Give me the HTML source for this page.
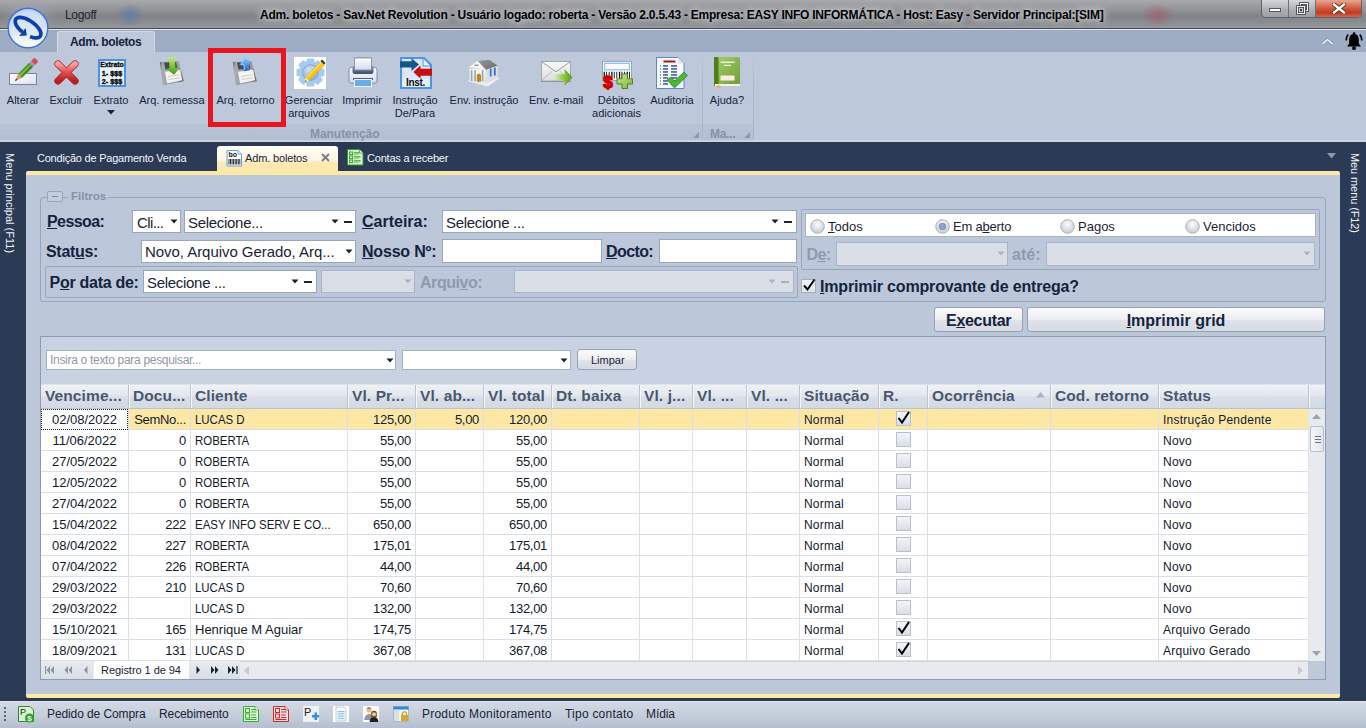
<!DOCTYPE html><html><head><meta charset="utf-8"><style>
*{box-sizing:border-box}
html,body{margin:0;padding:0;width:1366px;height:728px;overflow:hidden;background:#2b3a55;font-family:"Liberation Sans", sans-serif}
#root{position:relative;width:1366px;height:728px;overflow:hidden}
.u{text-decoration:underline}
</style></head><body><div id="root"><div style="position:absolute;left:0px;top:0px;width:1366px;height:29px;background:linear-gradient(180deg,#a8a9ab 0%,#94969a 30%,#818387 55%,#8b8e92 80%,#979a9e 100%);"></div><div style="position:absolute;left:0px;top:0px;width:60px;height:28px;background:radial-gradient(ellipse at center,rgba(170,175,190,0.5),rgba(0,0,0,0) 70%);"></div><div style="position:absolute;left:115px;top:2px;width:30px;height:26px;background:radial-gradient(ellipse at center,rgba(95,120,170,0.75),rgba(95,120,170,0) 65%);"></div><div style="position:absolute;left:1140px;top:2px;width:36px;height:26px;background:radial-gradient(ellipse at center,rgba(170,80,100,0.6),rgba(0,0,0,0) 65%);"></div><div style="position:absolute;left:0px;top:28px;width:1366px;height:1px;background:#4a4d52;"></div><div style="position:absolute;left:0px;top:29px;width:1366px;height:1px;background:#e2e5ea;"></div><div style="position:absolute;left:260px;top:9px;font-size:12px;font-weight:700;color:#000;white-space:nowrap;line-height:1;letter-spacing:-0.23px;text-shadow:0 0 9px rgba(215,218,222,0.9),0 0 9px rgba(215,218,222,0.7),0 0 4px rgba(225,228,232,0.6);">Adm. boletos - Sav.Net Revolution - Usuário logado: roberta - Versão 2.0.5.43 - Empresa: EASY INFO INFORMÁTICA - Host: Easy - Servidor Principal:[SIM]</div><div style="position:absolute;left:65px;top:9px;font-size:12px;font-weight:400;color:#1e2530;white-space:nowrap;line-height:1;letter-spacing:-0.3px;">Logoff</div><div style="position:absolute;left:1261px;top:0px;width:101px;height:18px;border:1px solid #5d6168;border-top:none;border-radius:0 0 5px 5px;background:linear-gradient(180deg,#d5d7da,#a9adb2 60%,#9ca0a6);overflow:hidden;"><div style="position:absolute;left:0px;top:0px;width:27px;height:17px;border-right:1px solid #6d7177;"><div style="position:absolute;left:7px;top:8px;width:12px;height:4px;background:#fff;border:1px solid #555;"></div></div><div style="position:absolute;left:27px;top:0px;width:27px;height:17px;border-right:1px solid #6d7177;"><svg style="position:absolute;left:7px;top:2px" width="13" height="13"><rect x="4.5" y="1.5" width="7" height="7" fill="none" stroke="#3a3d42" stroke-width="2.6"/><rect x="4.5" y="1.5" width="7" height="7" fill="none" stroke="#f4f4f4" stroke-width="1"/><rect x="1.5" y="4.5" width="7" height="7" fill="#c9ccd0" stroke="#3a3d42" stroke-width="2.6"/><rect x="1.5" y="4.5" width="7" height="7" fill="none" stroke="#f4f4f4" stroke-width="1"/><rect x="4" y="7" width="2" height="2" fill="#3a3d42"/></svg></div><div style="position:absolute;left:54px;top:0px;width:46px;height:17px;background:linear-gradient(180deg,#e8a793,#d0573b 50%,#c23a1f 75%,#d46a4c);"><svg style="position:absolute;left:16px;top:3px" width="14" height="11"><path d="M2 1.5 L12 9.5 M12 1.5 L2 9.5" stroke="#5a2a20" stroke-width="4.2" stroke-linecap="square"/><path d="M2 1.5 L12 9.5 M12 1.5 L2 9.5" stroke="#fff" stroke-width="2.4" stroke-linecap="square"/></svg></div></div><div style="position:absolute;left:0px;top:30px;width:1366px;height:22px;background:#9eadc4;"></div><div style="position:absolute;left:57px;top:31px;width:98px;height:22px;background:#bdc9da;border-radius:3px 3px 0 0;border:1px solid #d0d9e6;border-bottom:none;"></div><div style="position:absolute;left:70px;top:36px;font-size:12px;font-weight:700;color:#15243e;white-space:nowrap;line-height:1;letter-spacing:-0.4px;">Adm. boletos</div><svg style="position:absolute;left:1321px;top:37px" width="13" height="8" viewBox="0 0 13 8"><path d="M1.5 7 L6.5 2.5 L11.5 7" fill="none" stroke="#8a93a3" stroke-width="3.2"/><path d="M1.5 7 L6.5 2.5 L11.5 7" fill="none" stroke="#f7f8fa" stroke-width="1.6"/></svg><svg style="position:absolute;left:1344px;top:31px" width="20" height="20" viewBox="0 0 20 20"><path d="M10 3 C6.2 3 5.2 6 5.2 9 L5.2 12.5 L3 15.5 L17 15.5 L14.8 12.5 L14.8 9 C14.8 6 13.8 3 10 3 Z" fill="#000"/><circle cx="10" cy="2.6" r="1.3" fill="#000"/><circle cx="10" cy="17.2" r="1.9" fill="#000"/><path d="M4.2 3.5 Q2 6 2.2 9.5 M15.8 3.5 Q18 6 17.8 9.5" stroke="#000" stroke-width="1.6" fill="none"/></svg><svg style="position:absolute;left:6px;top:6px" width="44" height="44" viewBox="0 0 44 44"><defs><linearGradient id="lg" x1="0" y1="0" x2="0" y2="1"><stop offset="0" stop-color="#b9cdf2"/><stop offset="0.5" stop-color="#d6e2f8"/><stop offset="1" stop-color="#ffffff"/></linearGradient></defs><circle cx="22" cy="22" r="19.8" fill="url(#lg)" stroke="#3f72d6" stroke-width="1.4"/><ellipse cx="22" cy="14" rx="15" ry="9" fill="#ffffff" opacity="0.18"/><path d="M24.06 30.57 L25.16 30.97 L26.23 31.31 L27.28 31.57 L28.28 31.76 L29.23 31.86 L30.13 31.90 L30.97 31.85 L31.74 31.73 L32.44 31.52 L33.05 31.25 L33.59 30.90 L34.03 30.48 L34.39 29.99 L34.65 29.44 L34.81 28.83 L34.88 28.17 L34.85 27.46 L34.72 26.70 L34.50 25.90 L34.18 25.07 L33.77 24.22 L33.27 23.34 L32.68 22.46 L32.02 21.56 L31.27 20.67 L30.46 19.79 L29.59 18.92 L28.65 18.07 L27.67 17.24 L26.64 16.45 L25.58 15.70 L24.49 15.00 L23.38 14.34 L22.27 13.75 L21.15 13.21 L20.04 12.73 L18.94 12.33 L17.87 11.99 L16.82 11.73 L15.82 11.54 L14.87 11.44 L13.97 11.40 L13.13 11.45 L12.36 11.57 L11.66 11.78 L11.05 12.05 L10.51 12.40 L10.07 12.82 L9.71 13.31 L9.45 13.86 L9.29 14.47 L9.22 15.13 L9.25 15.84 L9.38 16.60 L9.60 17.40 L9.92 18.23 L10.33 19.08 L10.83 19.96 L11.42 20.84 L12.08 21.74 L12.83 22.63 L13.64 23.51 L14.51 24.38 L15.45 25.23 L16.43 26.06" fill="none" stroke="#0b3fae" stroke-width="3.7"/><path d="M13.18 30.11 L20.80 29.56 L19.69 22.00 Z" fill="#0b3fae"/></svg><div style="position:absolute;left:0px;top:52px;width:1366px;height:88px;background:#bdc9da;"></div><div style="position:absolute;left:0px;top:124px;width:753px;height:16px;background:linear-gradient(180deg,#b8c4d5,#b4c0d2);"></div><div style="position:absolute;left:0px;top:140px;width:1366px;height:2px;background:#c9d3e1;"></div><svg style="position:absolute;left:7px;top:56px;" width="32" height="32" viewBox="0 0 32 32">
<defs><linearGradient id="pg" x1="0" y1="0" x2="1" y2="0"><stop offset="0" stop-color="#5aa02a"/><stop offset="1" stop-color="#3c7d1c"/></linearGradient>
<linearGradient id="wr" x1="0" y1="0" x2="1" y2="1"><stop offset="0" stop-color="#ffffff"/><stop offset="1" stop-color="#dde1ef"/></linearGradient></defs>
<rect x="2.5" y="17.5" width="27" height="11" fill="url(#wr)" stroke="#7b80a8" stroke-width="1"/>
<path d="M8.00 25.00 L14.93 22.03 L10.97 18.07 Z" fill="#d9a070" /><path d="M8.00 25.00 L10.57 23.89 L9.11 22.43 Z" fill="#2a2a2a" /><path d="M14.93 22.03 L26.18 10.78 L22.22 6.82 L10.97 18.07 Z" fill="url(#pg)" /><path d="M13.15 20.25 L24.39 9.00 L23.50 8.11 L12.26 19.36 Z" fill="#c8ec7a" opacity="0.55"/><path d="M26.18 10.78 L28.30 8.66 L24.34 4.70 L22.22 6.82 Z" fill="#8e9cc4" /><path d="M28.30 8.66 L30.91 6.05 L30.49 4.49 L28.51 2.51 L26.95 2.09 L24.34 4.70 Z" fill="#e0464d" /></svg><svg style="position:absolute;left:52px;top:56px;" width="32" height="32" viewBox="0 0 32 32">
<defs><linearGradient id="xg" x1="0" y1="0" x2="0" y2="1"><stop offset="0" stop-color="#f7a3a3"/><stop offset="0.45" stop-color="#e35050"/><stop offset="1" stop-color="#b91f1f"/></linearGradient></defs>
<path d="M6 8 L23 25 M23 8 L6 25" stroke="#a81c1c" stroke-width="7.2" stroke-linecap="round"/>
<path d="M6 8 L23 25 M23 8 L6 25" stroke="url(#xg)" stroke-width="5.8" stroke-linecap="round"/>
</svg><svg style="position:absolute;left:98px;top:59px;" width="28" height="28" viewBox="0 0 28 28">
<rect x="1" y="1" width="26" height="26" fill="#eaf3fd" stroke="#4a92e6" stroke-width="2"/>
<text x="14" y="8.3" font-family="Liberation Sans" font-weight="700" font-size="6.8" text-anchor="middle" fill="#111" stroke="#111" stroke-width="0.35">Extrato</text>
<text x="14" y="17.3" font-family="Liberation Sans" font-weight="700" font-size="7.2" text-anchor="middle" fill="#111" stroke="#111" stroke-width="0.4">1- $$$</text>
<text x="14" y="24.6" font-family="Liberation Sans" font-weight="700" font-size="7.2" text-anchor="middle" fill="#111" stroke="#111" stroke-width="0.4">2- $$$</text>
</svg><svg style="position:absolute;left:155px;top:56px;" width="32" height="32" viewBox="0 0 32 32">
<defs><linearGradient id="ag155" x1="0" y1="0" x2="0" y2="1"><stop offset="0" stop-color="#c2f070"/><stop offset="1" stop-color="#3e9a16"/></linearGradient>
<linearGradient id="fg155" x1="0" y1="0" x2="1" y2="0.2"><stop offset="0" stop-color="#5e6166"/><stop offset="0.15" stop-color="#a9abae"/><stop offset="0.85" stop-color="#9a9c9f"/><stop offset="1" stop-color="#6b6e72"/></linearGradient></defs>
<path d="M4.8 5.9 L23.6 5.1 L28.8 25.2 L7.9 29.4 Z" fill="url(#fg155)"/>
<path d="M9 6.5 L21 6 L22.5 12.5 L10.5 13.5 Z" fill="#46494e"/>
<path d="M10 15.8 L25.1 13.7 L27.2 24.2 L12.1 27.3 Z" fill="#f3f3f1"/>
<path d="M13 20.5 L24.5 18.8 M13.6 23.5 L25 21.8" stroke="#c4c4c2" stroke-width="0.8"/>
<path d="M14 1.5 L20 1.1 L20.3 11.8 L24.7 11.4 L19.2 18.7 L11 12.8 L14.5 12.5 Z" fill="url(#ag155)"/></svg><svg style="position:absolute;left:228px;top:56px;" width="32" height="32" viewBox="0 0 32 32">
<defs><linearGradient id="ag228" x1="0" y1="0" x2="0" y2="1"><stop offset="0" stop-color="#8fd0ff"/><stop offset="1" stop-color="#1a66d0"/></linearGradient>
<linearGradient id="fg228" x1="0" y1="0" x2="1" y2="0.2"><stop offset="0" stop-color="#5e6166"/><stop offset="0.15" stop-color="#a9abae"/><stop offset="0.85" stop-color="#9a9c9f"/><stop offset="1" stop-color="#6b6e72"/></linearGradient></defs>
<path d="M4.8 5.9 L23.6 5.1 L28.8 25.2 L7.9 29.4 Z" fill="url(#fg228)"/>
<path d="M9 6.5 L21 6 L22.5 12.5 L10.5 13.5 Z" fill="#46494e"/>
<path d="M10 15.8 L25.1 13.7 L27.2 24.2 L12.1 27.3 Z" fill="#f3f3f1"/>
<path d="M13 20.5 L24.5 18.8 M13.6 23.5 L25 21.8" stroke="#c4c4c2" stroke-width="0.8"/>
<path d="M16.5 1 L24 7.2 L21 8.2 L21.5 14.3 L15.7 15.3 L15 8.9 L11 9.6 Z" fill="url(#ag228)"/><path d="M16.5 2.5 L13 8.8 L16 8.4 L16.5 14" stroke="#bfe3ff" stroke-width="0.8" fill="none" opacity="0.8"/></svg><svg style="position:absolute;left:294px;top:57px;" width="32" height="32" viewBox="0 0 32 32">
<defs><radialGradient id="hub" cx="40%" cy="30%" r="70%"><stop offset="0" stop-color="#c9e0f7"/><stop offset="1" stop-color="#8fb1dc"/></radialGradient></defs>
<rect x="0" y="0" width="32" height="32" fill="#fff"/>
<rect x="12.5" y="1.5" width="8" height="6" rx="1.5" fill="#a6cbf3" transform="rotate(0 16.5 15.5)"/><rect x="12.5" y="1.5" width="8" height="6" rx="1.5" fill="#a6cbf3" transform="rotate(45 16.5 15.5)"/><rect x="12.5" y="1.5" width="8" height="6" rx="1.5" fill="#a6cbf3" transform="rotate(90 16.5 15.5)"/><rect x="12.5" y="1.5" width="8" height="6" rx="1.5" fill="#a6cbf3" transform="rotate(135 16.5 15.5)"/><rect x="12.5" y="1.5" width="8" height="6" rx="1.5" fill="#a6cbf3" transform="rotate(180 16.5 15.5)"/><rect x="12.5" y="1.5" width="8" height="6" rx="1.5" fill="#a6cbf3" transform="rotate(225 16.5 15.5)"/><rect x="12.5" y="1.5" width="8" height="6" rx="1.5" fill="#a6cbf3" transform="rotate(270 16.5 15.5)"/><rect x="12.5" y="1.5" width="8" height="6" rx="1.5" fill="#a6cbf3" transform="rotate(315 16.5 15.5)"/>
<circle cx="16.5" cy="15.5" r="11.2" fill="#a6cbf3"/>
<circle cx="16.5" cy="15.5" r="7.8" fill="url(#hub)" stroke="#7d8ea6" stroke-width="0.7"/>
<path d="M11.5 20 L27 4.5 L30.5 8 L15 23.5 Z" fill="#f5c518" stroke="#d19c00" stroke-width="0.5"/>
<path d="M12 19.5 L27 4.5 L28.2 5.7 L13.2 20.7 Z" fill="#ffe36a" opacity="0.7"/>
<path d="M11.5 20 L15 23.5 L10.5 25 Z" fill="#f2e8b0"/>
<path d="M10.5 25 L11.5 23 L12.5 24 Z" fill="#555"/>
<path d="M26.5 4 L28 2.5 L31.5 6 L30 7.5 Z" fill="#333"/>
</svg><svg style="position:absolute;left:348px;top:57px;" width="32" height="32" viewBox="0 0 32 32">
<defs><linearGradient id="prg" x1="0" y1="0" x2="0" y2="1"><stop offset="0" stop-color="#ffffff"/><stop offset="1" stop-color="#d6dbea"/></linearGradient><linearGradient id="prd" x1="0" y1="0" x2="0" y2="1"><stop offset="0" stop-color="#7d88a8"/><stop offset="1" stop-color="#3f4b6e"/></linearGradient></defs>
<rect x="6.5" y="1" width="17" height="13" fill="url(#prg)" stroke="#7f89b0" stroke-width="0.8"/>
<path d="M1 13 Q1 10 5 10 L25 10 Q29 10 29 13 L29 24 Q29 26 27 26 L3 26 Q1 26 1 24 Z" fill="url(#prg)" stroke="#6f7aa3" stroke-width="0.8"/>
<path d="M4.5 10 L25.5 10 L25.5 14.5 Q25.5 17 23 17 L7 17 Q4.5 17 4.5 14.5 Z" fill="url(#prd)"/>
<rect x="6.5" y="1" width="17" height="12" fill="url(#prg)" stroke="#7f89b0" stroke-width="0.8"/>
<rect x="5" y="21" width="20" height="2" fill="#4e5b7e"/>
<rect x="6.5" y="22.5" width="17" height="7" fill="#6aaee6" stroke="#eef3fb" stroke-width="1"/>
</svg><svg style="position:absolute;left:400px;top:57px;" width="32" height="32" viewBox="0 0 32 32">
<path d="M1 1 L24 1 L31 8 L31 31 L1 31 Z" fill="#dce8fa" stroke="#4b94ea" stroke-width="2"/>
<path d="M23 2 L23 9 L30 9" fill="#eef4fd" stroke="#4b94ea" stroke-width="1"/>
<rect x="2" y="22" width="28" height="8" fill="#e6eefb"/>
<path d="M0 4.2 L11.5 4.2 L11.5 1.2 L19 7.5 L11.5 13.9 L11.5 10.4 L0 10.4 Z" fill="#14568a"/>
<path d="M32 11.7 L20.5 11.7 L20.5 8.6 L13.3 15 L20.5 21.4 L20.5 18.7 L32 18.7 Z" fill="#c80e0e"/>
<text x="15.5" y="28.8" font-family="Liberation Sans" font-weight="700" font-size="10" text-anchor="middle" fill="#111" letter-spacing="-0.3">Inst.</text>
</svg><svg style="position:absolute;left:468px;top:58px;" width="33" height="30" viewBox="0 0 33 30">
<defs><linearGradient id="roof" x1="0" y1="0" x2="1" y2="1"><stop offset="0" stop-color="#9a9a9a"/><stop offset="1" stop-color="#6a6a6a"/></linearGradient>
<linearGradient id="fac" x1="0" y1="0" x2="0" y2="1"><stop offset="0" stop-color="#fafafa"/><stop offset="1" stop-color="#dfe2e6"/></linearGradient></defs>
<path d="M0.4 23.2 L19.7 28.7 L31.6 20.3 L29 18.5 L18 24.5 L1.5 20.5 Z" fill="#eceef0" stroke="#d0d3d8" stroke-width="0.4"/>
<path d="M17.8 11.8 L29.6 7.6 L29.6 20 L17.8 25.5 Z" fill="#dcdfe4"/>
<rect x="21.8" y="10.5" width="1.8" height="8" fill="#4a72c8"/><rect x="25.8" y="9.5" width="2" height="8" fill="#4a72c8"/>
<rect x="1.5" y="11" width="16.3" height="13" fill="url(#fac)"/>
<rect x="2.8" y="12" width="1.6" height="11" fill="#9aa6b8"/><rect x="6.3" y="12" width="1.6" height="11" fill="#9aa6b8"/><rect x="13.8" y="12" width="1.6" height="11" fill="#9aa6b8"/>
<path d="M8.9 23.7 L8.9 17 Q11 13.8 13 17 L13 23.7 Z" fill="#c08a10"/>
<path d="M9.6 2.9 L21.2 1.7 L29.6 7.6 L17.8 11.8 Z" fill="url(#roof)"/>
<path d="M0.2 9.4 L9.6 2.9 L17.8 11.8 Z" fill="#f6f6f6" stroke="#d6d6d6" stroke-width="0.5"/>
<rect x="6.5" y="6.5" width="4" height="1.6" fill="#777" opacity="0.7"/>
</svg><svg style="position:absolute;left:541px;top:60px;" width="34" height="28" viewBox="0 0 34 28">
<defs><linearGradient id="env" x1="0" y1="0" x2="0" y2="1"><stop offset="0" stop-color="#f8f8f8"/><stop offset="1" stop-color="#dedede"/></linearGradient>
<linearGradient id="garr" x1="0" y1="0" x2="1" y2="0"><stop offset="0" stop-color="#a8d860" stop-opacity="0"/><stop offset="0.45" stop-color="#9cd04a"/><stop offset="1" stop-color="#5c9e18"/></linearGradient></defs>
<rect x="0.5" y="1.5" width="29" height="19.5" fill="url(#env)" stroke="#a0a0a0" stroke-width="0.9"/>
<rect x="0" y="21" width="30" height="1" fill="#6d7480" opacity="0.5"/>
<path d="M1 2 L15 11.8 L29 2" fill="none" stroke="#8e8e8e" stroke-width="0.9"/>
<path d="M1 20 L11.5 11 M29 20 L18.5 11" stroke="#a6a6a6" stroke-width="0.7"/>
<path d="M13 14 L23.5 14 L23.5 9.8 L31 17.3 L23.5 25 L23.5 20.6 L13 20.6 Z" fill="url(#garr)"/>
<path d="M23.5 9.8 L31 17.3 L23.5 25" fill="none" stroke="#4f8a12" stroke-width="0.8"/>
</svg><svg style="position:absolute;left:601px;top:60px;" width="34" height="30" viewBox="0 0 34 30">
<defs><linearGradient id="plg" x1="0" y1="0" x2="1" y2="1"><stop offset="0" stop-color="#c6e88a"/><stop offset="1" stop-color="#7fb63a"/></linearGradient></defs>
<rect x="1.5" y="1.3" width="29" height="19.3" fill="#fff" stroke="#8f949b" stroke-width="0.8"/>
<rect x="3.5" y="3.3" width="25" height="6.5" fill="#fbf9f9" stroke="#8cc6f2" stroke-width="1.4"/>
<rect x="2.60" y="11.7" width="1.3" height="6.8" fill="#111"/><rect x="5.15" y="11.7" width="0.9" height="6.8" fill="#111"/><rect x="7.70" y="11.7" width="0.9" height="6.8" fill="#111"/><rect x="10.25" y="11.7" width="1.3" height="6.8" fill="#111"/><rect x="12.80" y="11.7" width="0.9" height="6.8" fill="#111"/><rect x="15.35" y="11.7" width="0.9" height="6.8" fill="#111"/><rect x="17.90" y="11.7" width="1.3" height="6.8" fill="#111"/><rect x="20.45" y="11.7" width="0.9" height="6.8" fill="#111"/><rect x="23.00" y="11.7" width="0.9" height="6.8" fill="#111"/><rect x="25.55" y="11.7" width="1.3" height="6.8" fill="#111"/><rect x="28.10" y="11.7" width="0.9" height="6.8" fill="#111"/>
<text x="7" y="28" font-family="Liberation Sans" font-weight="700" font-size="17" text-anchor="middle" fill="#d00000" stroke="#d00000" stroke-width="1.3">$</text>
<path d="M21 14 L26.5 14 L26.5 18.8 L31.5 18.8 L31.5 24 L26.5 24 L26.5 28.5 L21 28.5 L21 24 L16 24 L16 18.8 L21 18.8 Z" fill="url(#plg)" stroke="#4a7a16" stroke-width="0.9"/>
</svg><svg style="position:absolute;left:656px;top:57px;" width="34" height="32" viewBox="0 0 34 32">
<path d="M0.5 0.5 L22 0.5 L28 6.5 L28 31.5 L0.5 31.5 Z" fill="#f6f9fe" stroke="#5b86c8" stroke-width="1"/>
<path d="M22 0.5 L22 6.5 L28 6.5" fill="#e2e2e2"/>
<rect x="7.5" y="3.5" width="12" height="2" fill="#b3121a"/>
<rect x="4" y="8.5" width="1" height="1" fill="#1e3c8a"/><rect x="7" y="8.3" width="5" height="1.3" fill="#1e3c8a"/><rect x="15" y="8.3" width="6" height="1.3" fill="#1e3c8a"/><rect x="4" y="11.5" width="1" height="1" fill="#1e3c8a"/><rect x="7" y="11.3" width="5" height="1.3" fill="#1e3c8a"/><rect x="15" y="11.3" width="6" height="1.3" fill="#1e3c8a"/><rect x="4" y="14.5" width="1" height="1" fill="#1e3c8a"/><rect x="7" y="14.3" width="5" height="1.3" fill="#1e3c8a"/><rect x="15" y="14.3" width="6" height="1.3" fill="#1e3c8a"/><rect x="4" y="17.5" width="1" height="1" fill="#1e3c8a"/><rect x="7" y="17.3" width="5" height="1.3" fill="#1e3c8a"/><rect x="15" y="17.3" width="6" height="1.3" fill="#1e3c8a"/><rect x="4" y="20.5" width="1" height="1" fill="#1e3c8a"/><rect x="7" y="20.3" width="5" height="1.3" fill="#1e3c8a"/><rect x="15" y="20.3" width="6" height="1.3" fill="#1e3c8a"/><rect x="4" y="23.5" width="1" height="1" fill="#1e3c8a"/><rect x="7" y="23.3" width="5" height="1.3" fill="#1e3c8a"/><rect x="15" y="23.3" width="6" height="1.3" fill="#1e3c8a"/><rect x="4" y="26.5" width="1" height="1" fill="#1e3c8a"/><rect x="7" y="26.3" width="5" height="1.3" fill="#1e3c8a"/><rect x="15" y="26.3" width="6" height="1.3" fill="#1e3c8a"/>
<path d="M11 23 L15 20 L18.5 24 L28 15 L31.5 18.5 L18.5 31 Z" fill="#4fb53a" stroke="#2d8a22" stroke-width="0.8"/>
</svg><svg style="position:absolute;left:714px;top:57px;" width="27" height="31" viewBox="0 0 27 31">
<defs><linearGradient id="bk" x1="0" y1="0" x2="1" y2="1"><stop offset="0" stop-color="#a6cf6a"/><stop offset="1" stop-color="#6f9d3a"/></linearGradient></defs>
<rect x="0" y="0" width="26" height="29" rx="2" fill="url(#bk)"/>
<rect x="0" y="0" width="4.5" height="29" rx="1" fill="#4f7f1c"/>
<rect x="6.5" y="4.5" width="14" height="1.5" fill="#eaf3d8"/><rect x="10" y="7.8" width="7" height="1.2" fill="#eaf3d8"/>
<rect x="6.5" y="18.5" width="14" height="5" rx="0.5" fill="#fbece4"/>
<rect x="1" y="27" width="25" height="2" fill="#f6f1e6"/>
<path d="M2.8 28.5 L6.5 28.5 L6.5 31 L4.6 30 L2.8 31 Z" fill="#f0b020"/>
</svg><div style="position:absolute;left:-37px;width:120px;top:94px;text-align:center;font-size:11px;color:#15233f;white-space:nowrap;line-height:13px">Alterar</div><div style="position:absolute;left:6px;width:120px;top:94px;text-align:center;font-size:11px;color:#15233f;white-space:nowrap;line-height:13px">Excluir</div><div style="position:absolute;left:51px;width:120px;top:94px;text-align:center;font-size:11px;color:#15233f;white-space:nowrap;line-height:13px">Extrato</div><div style="position:absolute;left:112px;width:120px;top:94px;text-align:center;font-size:11px;color:#15233f;white-space:nowrap;line-height:13px">Arq. remessa</div><div style="position:absolute;left:185.5px;width:120px;top:94px;text-align:center;font-size:11px;color:#15233f;white-space:nowrap;line-height:13px">Arq. retorno</div><div style="position:absolute;left:249px;width:120px;top:94px;text-align:center;font-size:11px;color:#15233f;white-space:nowrap;line-height:13px">Gerenciar<br>arquivos</div><div style="position:absolute;left:302px;width:120px;top:94px;text-align:center;font-size:11px;color:#15233f;white-space:nowrap;line-height:13px">Imprimir</div><div style="position:absolute;left:355px;width:120px;top:94px;text-align:center;font-size:11px;color:#15233f;white-space:nowrap;line-height:13px">Instrução<br>De/Para</div><div style="position:absolute;left:424px;width:120px;top:94px;text-align:center;font-size:11px;color:#15233f;white-space:nowrap;line-height:13px">Env. instrução</div><div style="position:absolute;left:496px;width:120px;top:94px;text-align:center;font-size:11px;color:#15233f;white-space:nowrap;line-height:13px">Env. e-mail</div><div style="position:absolute;left:556.5px;width:120px;top:94px;text-align:center;font-size:11px;color:#15233f;white-space:nowrap;line-height:13px">Débitos<br>adicionais</div><div style="position:absolute;left:612px;width:120px;top:94px;text-align:center;font-size:11px;color:#15233f;white-space:nowrap;line-height:13px">Auditoria</div><div style="position:absolute;left:667px;width:120px;top:94px;text-align:center;font-size:11px;color:#15233f;white-space:nowrap;line-height:13px">Ajuda?</div><svg style="position:absolute;left:107px;top:110px" width="8" height="5"><path d="M0 0 L8 0 L4 4.5 Z" fill="#15233f"/></svg><div style="position:absolute;left:310px;top:127.5px;font-size:12px;font-weight:700;color:#8592aa;white-space:nowrap;line-height:1;letter-spacing:-0.05px;">Manutenção</div><div style="position:absolute;left:710px;top:127.5px;font-size:12px;font-weight:700;color:#8592aa;white-space:nowrap;line-height:1;letter-spacing:-0.3px;">Ma...</div><svg style="position:absolute;left:693px;top:132px" width="6" height="6"><path d="M6 0 L6 6 L0 6 Z" fill="#8c99b0"/></svg><svg style="position:absolute;left:744px;top:132px" width="6" height="6"><path d="M6 0 L6 6 L0 6 Z" fill="#8c99b0"/></svg><div style="position:absolute;left:702px;top:54px;width:1px;height:86px;background:linear-gradient(180deg,rgba(169,181,201,0) 0%,#b0bccf 25%,#a9b5c9 100%);"></div><div style="position:absolute;left:753px;top:54px;width:1px;height:86px;background:linear-gradient(180deg,rgba(169,181,201,0) 0%,#b0bccf 25%,#a9b5c9 100%);"></div><div style="position:absolute;left:208px;top:48px;width:78px;height:79px;border:5px solid #e8141e;"></div><div style="position:absolute;left:4px;top:153px;writing-mode:vertical-rl;font-size:11px;color:#f2f4f8;white-space:nowrap;line-height:11px;letter-spacing:0px">Menu principal (F11)</div><div style="position:absolute;left:1349px;top:153px;writing-mode:vertical-rl;font-size:11px;color:#f2f4f8;white-space:nowrap;line-height:11px;letter-spacing:-0.1px">Meu menu (F12)</div><div style="position:absolute;left:37px;top:153px;font-size:11px;font-weight:400;color:#f4f6fa;white-space:nowrap;line-height:1;letter-spacing:-0.22px;">Condição de Pagamento Venda</div><div style="position:absolute;left:217px;top:146px;width:121px;height:26px;background:linear-gradient(180deg,#fffdf7 0%,#fdf5df 55%,#fbe9b6 62%,#fde8a8 100%);border-radius:3px 3px 0 0;"></div><svg style="position:absolute;left:226px;top:150px;" width="17" height="17" viewBox="0 0 17 17"><path d="M1 0.5 L12 0.5 L15.5 4 L15.5 16 L1 16 Z" fill="#fff" stroke="#5aa0e0" stroke-width="1"/><path d="M12 0.5 L12 4 L15.5 4" fill="#e8f2fc" stroke="#5aa0e0" stroke-width="0.8"/><text x="2.5" y="7.2" font-family="Liberation Sans" font-size="7" font-weight="700" fill="#111">bo</text><rect x="2.50" y="9" width="0.9" height="5.5" fill="#111"/><rect x="4.05" y="9" width="0.9" height="5.5" fill="#111"/><rect x="5.60" y="9" width="0.9" height="5.5" fill="#111"/><rect x="7.15" y="9" width="0.9" height="5.5" fill="#111"/><rect x="8.70" y="9" width="0.9" height="5.5" fill="#111"/><rect x="10.25" y="9" width="0.9" height="5.5" fill="#111"/><rect x="11.80" y="9" width="0.9" height="5.5" fill="#111"/><rect x="13.35" y="9" width="0.9" height="5.5" fill="#111"/></svg><div style="position:absolute;left:245px;top:153px;font-size:11px;font-weight:400;color:#1a2336;white-space:nowrap;line-height:1;letter-spacing:-0.15px;">Adm. boletos</div><svg style="position:absolute;left:321px;top:153px" width="9" height="9"><path d="M1 1 L8 8 M8 1 L1 8" stroke="#7a7f88" stroke-width="2"/></svg><svg style="position:absolute;left:347px;top:149px;" width="17" height="17" viewBox="0 0 17 17"><path d="M0.5 0.5 L12.5 0.5 L16 4 L16 16 L0.5 16 Z" fill="#d9f5cc" stroke="#2f9a2a" stroke-width="1"/><path d="M12.5 0.5 L12.5 4 L16 4" fill="#fff" stroke="#2f9a2a" stroke-width="0.8"/><rect x="2.5" y="3.0" width="3.2" height="2.6" fill="none" stroke="#2f9a2a" stroke-width="0.9"/><rect x="7" y="3.3" width="5" height="1.1" fill="#2f9a2a"/><rect x="7" y="5.3" width="5" height="0.8" fill="#7fc87a"/><rect x="2.5" y="7.0" width="3.2" height="2.6" fill="none" stroke="#2f9a2a" stroke-width="0.9"/><rect x="7" y="7.3" width="6.5" height="1.1" fill="#2f9a2a"/><rect x="7" y="9.3" width="5" height="0.8" fill="#7fc87a"/><rect x="2.5" y="11.0" width="3.2" height="2.6" fill="none" stroke="#2f9a2a" stroke-width="0.9"/><rect x="7" y="11.3" width="6.5" height="1.1" fill="#2f9a2a"/><rect x="7" y="13.3" width="5" height="0.8" fill="#7fc87a"/></svg><div style="position:absolute;left:367px;top:153px;font-size:11px;font-weight:400;color:#f4f6fa;white-space:nowrap;line-height:1;letter-spacing:-0.2px;">Contas a receber</div><svg style="position:absolute;left:1327px;top:153px" width="9" height="6"><path d="M0 0 L9 0 L4.5 5.5 Z" fill="#8d97ab"/></svg><div style="position:absolute;left:26px;top:171px;width:1314px;height:527px;background:#bcc8d9;border-top:4px solid #fde8a6;border-bottom:4px solid #fde8a6;border-radius:2px 2px 2px 2px;"></div><div style="position:absolute;left:40px;top:197px;width:1286px;height:105px;border:1px solid #98a6bd;border-radius:3px;"></div><div style="position:absolute;left:68px;top:190px;width:40px;height:14px;background:#bcc8d9;"></div><div style="position:absolute;left:47px;top:191px;width:16px;height:11px;border:1px solid #98a6bd;border-radius:2px;background:#c3cedd;"><div style="position:absolute;left:4px;top:4px;width:6px;height:1px;background:#7d8aa3"></div></div><div style="position:absolute;left:71px;top:190.5px;font-size:11.5px;font-weight:700;color:#8592aa;white-space:nowrap;line-height:1;">Filtros</div><div style="position:absolute;left:47px;top:214px;font-size:16px;font-weight:700;color:#15233f;white-space:nowrap;line-height:1;letter-spacing:-0.6px;"><span class="u">P</span>essoa:</div><div style="position:absolute;left:132px;top:210px;width:49px;height:23px;background:#fff;border:1px solid #98a6bd;"><div style="position:absolute;left:4px;top:4px;font-size:15px;font-weight:400;color:#1a2336;white-space:nowrap;line-height:1;letter-spacing:-0.6px;">Cli...</div></div><svg style="position:absolute;left:170px;top:219px" width="8" height="5"><path d="M0.5 0.5 L7.5 0.5 L4 4.5 Z" fill="#1a2336"/></svg><div style="position:absolute;left:184px;top:210px;width:172px;height:23px;background:#fff;border:1px solid #98a6bd;"><div style="position:absolute;left:3px;top:4px;font-size:15px;font-weight:400;color:#1a2336;white-space:nowrap;line-height:1;letter-spacing:-0.3px;">Selecione...</div></div><svg style="position:absolute;left:331px;top:219px" width="8" height="5"><path d="M0.5 0.5 L7.5 0.5 L4 4.5 Z" fill="#1a2336"/></svg><div style="position:absolute;left:344px;top:221px;width:8px;height:2px;background:#1a2336;"></div><div style="position:absolute;left:362px;top:214px;font-size:16px;font-weight:700;color:#15233f;white-space:nowrap;line-height:1;letter-spacing:0px;"><span class="u">C</span>arteira:</div><div style="position:absolute;left:442px;top:210px;width:355px;height:23px;background:#fff;border:1px solid #98a6bd;"><div style="position:absolute;left:3px;top:4px;font-size:15px;font-weight:400;color:#1a2336;white-space:nowrap;line-height:1;letter-spacing:-0.3px;">Selecione ...</div></div><svg style="position:absolute;left:771px;top:219px" width="8" height="5"><path d="M0.5 0.5 L7.5 0.5 L4 4.5 Z" fill="#1a2336"/></svg><div style="position:absolute;left:784px;top:221px;width:8px;height:2px;background:#1a2336;"></div><div style="position:absolute;left:46px;top:243.5px;font-size:16px;font-weight:700;color:#15233f;white-space:nowrap;line-height:1;letter-spacing:-0.3px;">Stat<span class="u">u</span>s:</div><div style="position:absolute;left:141px;top:240px;width:215px;height:23px;background:#fff;border:1px solid #98a6bd;"><div style="position:absolute;left:3px;top:3px;font-size:15px;font-weight:400;color:#1a2336;white-space:nowrap;line-height:1;letter-spacing:-0.05px;">Novo, Arquivo Gerado, Arq...</div></div><svg style="position:absolute;left:345px;top:249px" width="8" height="5"><path d="M0.5 0.5 L7.5 0.5 L4 4.5 Z" fill="#1a2336"/></svg><div style="position:absolute;left:362px;top:243.5px;font-size:16px;font-weight:700;color:#15233f;white-space:nowrap;line-height:1;letter-spacing:-0.2px;"><span class="u">N</span>osso Nº:</div><div style="position:absolute;left:442px;top:239px;width:160px;height:24px;background:#fff;border:1px solid #98a6bd;"></div><div style="position:absolute;left:606px;top:243.5px;font-size:16px;font-weight:700;color:#15233f;white-space:nowrap;line-height:1;letter-spacing:-0.6px;"><span class="u">D</span>octo:</div><div style="position:absolute;left:659px;top:239px;width:138px;height:24px;background:#fff;border:1px solid #98a6bd;"></div><div style="position:absolute;left:45px;top:266px;width:753px;height:32px;border:1px solid #98a6bd;border-radius:2px;"></div><div style="position:absolute;left:49.5px;top:274.5px;font-size:16px;font-weight:700;color:#15233f;white-space:nowrap;line-height:1;letter-spacing:-0.28px;">P<span class="u">o</span>r data de:</div><div style="position:absolute;left:143px;top:270px;width:174px;height:23px;background:#fff;border:1px solid #98a6bd;"><div style="position:absolute;left:3px;top:4px;font-size:15px;font-weight:400;color:#1a2336;white-space:nowrap;line-height:1;letter-spacing:-0.3px;">Selecione ...</div></div><svg style="position:absolute;left:291px;top:279px" width="8" height="5"><path d="M0.5 0.5 L7.5 0.5 L4 4.5 Z" fill="#1a2336"/></svg><div style="position:absolute;left:304px;top:281px;width:8px;height:2px;background:#1a2336;"></div><div style="position:absolute;left:321px;top:270px;width:94px;height:23px;background:#d8dde6;border:1px solid #a9b4c6;"></div><svg style="position:absolute;left:404px;top:279px" width="8" height="5"><path d="M0.5 0.5 L7.5 0.5 L4 4.5 Z" fill="#aab2c0"/></svg><div style="position:absolute;left:420px;top:274.5px;font-size:16px;font-weight:700;color:#8e9ab0;white-space:nowrap;line-height:1;letter-spacing:-0.45px;">Arqui<span class="u">v</span>o:</div><div style="position:absolute;left:514px;top:270px;width:280px;height:23px;background:#d8dde6;border:1px solid #a9b4c6;"></div><svg style="position:absolute;left:768px;top:279px" width="8" height="5"><path d="M0.5 0.5 L7.5 0.5 L4 4.5 Z" fill="#aab2c0"/></svg><div style="position:absolute;left:781px;top:281px;width:8px;height:2px;background:#aab2c0;"></div><div style="position:absolute;left:801px;top:209px;width:519px;height:61px;border:1px solid #98a6bd;border-radius:2px;"></div><div style="position:absolute;left:805px;top:213px;width:511px;height:24px;background:#fff;border:1px solid #a6b2c4;"></div><svg style="position:absolute;left:810px;top:219px;" width="15" height="15" viewBox="0 0 15 15"><defs><radialGradient id="rg817" cx="50%" cy="35%" r="60%"><stop offset="0" stop-color="#fdfdfd"/><stop offset="1" stop-color="#c9ced8"/></radialGradient></defs><circle cx="7.5" cy="7.5" r="6.8" fill="url(#rg817)" stroke="#a7adb9" stroke-width="0.9"/></svg><div style="position:absolute;left:828px;top:220px;font-size:13px;font-weight:400;color:#1a2336;white-space:nowrap;line-height:1;"><span class="u">T</span>odos</div><svg style="position:absolute;left:935px;top:219px;" width="15" height="15" viewBox="0 0 15 15"><defs><radialGradient id="rg942" cx="50%" cy="35%" r="60%"><stop offset="0" stop-color="#fdfdfd"/><stop offset="1" stop-color="#c9ced8"/></radialGradient></defs><circle cx="7.5" cy="7.5" r="6.8" fill="url(#rg942)" stroke="#a7adb9" stroke-width="0.9"/><circle cx="7.5" cy="7.5" r="3.3" fill="#8fa3c8" stroke="#6f87b8" stroke-width="0.8"/></svg><div style="position:absolute;left:953px;top:220px;font-size:13px;font-weight:400;color:#1a2336;white-space:nowrap;line-height:1;letter-spacing:-0.2px;">Em a<span class="u">b</span>erto</div><svg style="position:absolute;left:1060px;top:219px;" width="15" height="15" viewBox="0 0 15 15"><defs><radialGradient id="rg1067" cx="50%" cy="35%" r="60%"><stop offset="0" stop-color="#fdfdfd"/><stop offset="1" stop-color="#c9ced8"/></radialGradient></defs><circle cx="7.5" cy="7.5" r="6.8" fill="url(#rg1067)" stroke="#a7adb9" stroke-width="0.9"/></svg><div style="position:absolute;left:1078px;top:220px;font-size:13px;font-weight:400;color:#1a2336;white-space:nowrap;line-height:1;">Pa<span class="u">g</span>os</div><svg style="position:absolute;left:1185px;top:219px;" width="15" height="15" viewBox="0 0 15 15"><defs><radialGradient id="rg1192" cx="50%" cy="35%" r="60%"><stop offset="0" stop-color="#fdfdfd"/><stop offset="1" stop-color="#c9ced8"/></radialGradient></defs><circle cx="7.5" cy="7.5" r="6.8" fill="url(#rg1192)" stroke="#a7adb9" stroke-width="0.9"/></svg><div style="position:absolute;left:1203px;top:220px;font-size:13px;font-weight:400;color:#1a2336;white-space:nowrap;line-height:1;">Vencidos</div><div style="position:absolute;left:806.5px;top:246.5px;font-size:16px;font-weight:700;color:#8e9ab0;white-space:nowrap;line-height:1;letter-spacing:-0.5px;">D<span class="u">e</span>:</div><div style="position:absolute;left:836px;top:242px;width:172px;height:24px;background:#d8dde6;border:1px solid #a9b4c6;"></div><svg style="position:absolute;left:997px;top:251px" width="8" height="5"><path d="M0.5 0.5 L7.5 0.5 L4 4.5 Z" fill="#aab2c0"/></svg><div style="position:absolute;left:1012px;top:246.5px;font-size:16px;font-weight:700;color:#8e9ab0;white-space:nowrap;line-height:1;">até:</div><div style="position:absolute;left:1046px;top:242px;width:269px;height:24px;background:#d8dde6;border:1px solid #a9b4c6;"></div><svg style="position:absolute;left:1303px;top:251px" width="8" height="5"><path d="M0.5 0.5 L7.5 0.5 L4 4.5 Z" fill="#aab2c0"/></svg><div style="position:absolute;left:801px;top:279px;width:15px;height:14px;background:linear-gradient(180deg,#f4f5f8,#dfe3ea);border:1px solid #a8aeba;"></div><svg style="position:absolute;left:802px;top:278px" width="14" height="14"><path d="M2 7.5 L5.5 11.5 L12.5 1.5" fill="none" stroke="#000" stroke-width="2"/></svg><div style="position:absolute;left:820px;top:278.7px;font-size:16px;font-weight:700;color:#15233f;white-space:nowrap;line-height:1;letter-spacing:-0.16px;"><span class="u">I</span>mprimir comprovante de entrega?</div><div style="position:absolute;left:934px;top:307px;width:89px;height:25px;background:linear-gradient(180deg,#fbfbfc 0%,#eceef2 50%,#dfe3ea 51%,#d5dae3 100%);border:1px solid #98a2b3;border-radius:3px;"><div style="position:absolute;left:11px;top:4.6px;font-size:16px;font-weight:700;color:#15233f;white-space:nowrap;line-height:1;letter-spacing:-0.3px;">E<span class="u">x</span>ecutar</div></div><div style="position:absolute;left:1027px;top:307px;width:298px;height:25px;background:linear-gradient(180deg,#fbfbfc 0%,#eceef2 50%,#dfe3ea 51%,#d5dae3 100%);border:1px solid #98a2b3;border-radius:3px;"><div style="position:absolute;left:0;right:0;top:4.6px;text-align:center;font-size:16px;font-weight:700;color:#15233f;line-height:1;letter-spacing:0px"><span class="u">I</span>mprimir grid</div></div><div style="position:absolute;left:40px;top:336px;width:1286px;height:344px;background:#c8d2e2;border:1px solid #8e9cb3;"></div><div style="position:absolute;left:46px;top:350px;width:350px;height:20px;background:#fff;border:1px solid #a3afc2;"><div style="position:absolute;left:3px;top:3px;font-size:12px;font-weight:400;color:#8f97a6;white-space:nowrap;line-height:1;letter-spacing:-0.3px;">Insira o texto para pesquisar...</div></div><svg style="position:absolute;left:386px;top:358px" width="8" height="5"><path d="M0.5 0.5 L7.5 0.5 L4 4.5 Z" fill="#1a2336"/></svg><div style="position:absolute;left:402px;top:350px;width:169px;height:20px;background:#fff;border:1px solid #a3afc2;"></div><svg style="position:absolute;left:560px;top:358px" width="8" height="5"><path d="M0.5 0.5 L7.5 0.5 L4 4.5 Z" fill="#1a2336"/></svg><div style="position:absolute;left:577px;top:349px;width:60px;height:21px;background:linear-gradient(180deg,#fbfbfc 0%,#eceef2 50%,#dfe3ea 51%,#d5dae3 100%);border:1px solid #98a2b3;border-radius:3px;"><div style="position:absolute;left:13px;top:5px;font-size:11px;font-weight:400;color:#1a2336;white-space:nowrap;line-height:1;">Limpar</div></div><div style="position:absolute;left:41px;top:384px;width:1284px;height:25px;background:linear-gradient(180deg,#eef1f5 0%,#e4e8ee 45%,#d8dee7 55%,#d3dae4 100%);border-bottom:1px solid #b9c3d2;border-top:1px solid #dfe4ec;"></div><div style="position:absolute;left:128px;top:385px;width:1px;height:23px;background:#bcc6d4;box-shadow:1px 0 0 #f4f6f9;"></div><div style="position:absolute;left:45px;top:387.8px;font-size:15.5px;font-weight:700;color:#4a5770;white-space:nowrap;line-height:1;letter-spacing:0.1px;">Vencime...</div><div style="position:absolute;left:190px;top:385px;width:1px;height:23px;background:#bcc6d4;box-shadow:1px 0 0 #f4f6f9;"></div><div style="position:absolute;left:133px;top:387.8px;font-size:15.5px;font-weight:700;color:#4a5770;white-space:nowrap;line-height:1;letter-spacing:0.1px;">Docu...</div><div style="position:absolute;left:347px;top:385px;width:1px;height:23px;background:#bcc6d4;box-shadow:1px 0 0 #f4f6f9;"></div><div style="position:absolute;left:195px;top:387.8px;font-size:15.5px;font-weight:700;color:#4a5770;white-space:nowrap;line-height:1;letter-spacing:0.1px;">Cliente</div><div style="position:absolute;left:415px;top:385px;width:1px;height:23px;background:#bcc6d4;box-shadow:1px 0 0 #f4f6f9;"></div><div style="position:absolute;left:352px;top:387.8px;font-size:15.5px;font-weight:700;color:#4a5770;white-space:nowrap;line-height:1;letter-spacing:0.1px;">Vl. Pr...</div><div style="position:absolute;left:483px;top:385px;width:1px;height:23px;background:#bcc6d4;box-shadow:1px 0 0 #f4f6f9;"></div><div style="position:absolute;left:420px;top:387.8px;font-size:15.5px;font-weight:700;color:#4a5770;white-space:nowrap;line-height:1;letter-spacing:0.1px;">Vl. ab...</div><div style="position:absolute;left:551px;top:385px;width:1px;height:23px;background:#bcc6d4;box-shadow:1px 0 0 #f4f6f9;"></div><div style="position:absolute;left:488px;top:387.8px;font-size:15.5px;font-weight:700;color:#4a5770;white-space:nowrap;line-height:1;letter-spacing:0.1px;">Vl. total</div><div style="position:absolute;left:639px;top:385px;width:1px;height:23px;background:#bcc6d4;box-shadow:1px 0 0 #f4f6f9;"></div><div style="position:absolute;left:556px;top:387.8px;font-size:15.5px;font-weight:700;color:#4a5770;white-space:nowrap;line-height:1;letter-spacing:0.1px;">Dt. baixa</div><div style="position:absolute;left:692px;top:385px;width:1px;height:23px;background:#bcc6d4;box-shadow:1px 0 0 #f4f6f9;"></div><div style="position:absolute;left:644px;top:387.8px;font-size:15.5px;font-weight:700;color:#4a5770;white-space:nowrap;line-height:1;letter-spacing:0.1px;">Vl. j...</div><div style="position:absolute;left:746px;top:385px;width:1px;height:23px;background:#bcc6d4;box-shadow:1px 0 0 #f4f6f9;"></div><div style="position:absolute;left:697px;top:387.8px;font-size:15.5px;font-weight:700;color:#4a5770;white-space:nowrap;line-height:1;letter-spacing:0.1px;">Vl. ...</div><div style="position:absolute;left:799px;top:385px;width:1px;height:23px;background:#bcc6d4;box-shadow:1px 0 0 #f4f6f9;"></div><div style="position:absolute;left:751px;top:387.8px;font-size:15.5px;font-weight:700;color:#4a5770;white-space:nowrap;line-height:1;letter-spacing:0.1px;">Vl. ...</div><div style="position:absolute;left:878px;top:385px;width:1px;height:23px;background:#bcc6d4;box-shadow:1px 0 0 #f4f6f9;"></div><div style="position:absolute;left:804px;top:387.8px;font-size:15.5px;font-weight:700;color:#4a5770;white-space:nowrap;line-height:1;letter-spacing:0.1px;">Situação</div><div style="position:absolute;left:927px;top:385px;width:1px;height:23px;background:#bcc6d4;box-shadow:1px 0 0 #f4f6f9;"></div><div style="position:absolute;left:883px;top:387.8px;font-size:15.5px;font-weight:700;color:#4a5770;white-space:nowrap;line-height:1;letter-spacing:0.1px;">R.</div><div style="position:absolute;left:1050px;top:385px;width:1px;height:23px;background:#bcc6d4;box-shadow:1px 0 0 #f4f6f9;"></div><div style="position:absolute;left:932px;top:387.8px;font-size:15.5px;font-weight:700;color:#4a5770;white-space:nowrap;line-height:1;letter-spacing:0.1px;">Ocorrência</div><div style="position:absolute;left:1158px;top:385px;width:1px;height:23px;background:#bcc6d4;box-shadow:1px 0 0 #f4f6f9;"></div><div style="position:absolute;left:1055px;top:387.8px;font-size:15.5px;font-weight:700;color:#4a5770;white-space:nowrap;line-height:1;letter-spacing:0.1px;">Cod. retorno</div><div style="position:absolute;left:1308px;top:385px;width:1px;height:23px;background:#bcc6d4;box-shadow:1px 0 0 #f4f6f9;"></div><div style="position:absolute;left:1163px;top:387.8px;font-size:15.5px;font-weight:700;color:#4a5770;white-space:nowrap;line-height:1;letter-spacing:0.1px;">Status</div><svg style="position:absolute;left:1036px;top:392px" width="9" height="6"><path d="M0 5.5 L9 5.5 L4.5 0 Z" fill="#a9b3c2"/></svg><div style="position:absolute;left:41px;top:409px;width:1267px;height:21px;background:#fde7a5;border-bottom:1px solid #d9dee9;"></div><div style="position:absolute;left:128px;top:409px;width:1px;height:21px;background:#d9dee9;"></div><div style="position:absolute;left:190px;top:409px;width:1px;height:21px;background:#d9dee9;"></div><div style="position:absolute;left:347px;top:409px;width:1px;height:21px;background:#d9dee9;"></div><div style="position:absolute;left:415px;top:409px;width:1px;height:21px;background:#d9dee9;"></div><div style="position:absolute;left:483px;top:409px;width:1px;height:21px;background:#d9dee9;"></div><div style="position:absolute;left:551px;top:409px;width:1px;height:21px;background:#d9dee9;"></div><div style="position:absolute;left:639px;top:409px;width:1px;height:21px;background:#d9dee9;"></div><div style="position:absolute;left:692px;top:409px;width:1px;height:21px;background:#d9dee9;"></div><div style="position:absolute;left:746px;top:409px;width:1px;height:21px;background:#d9dee9;"></div><div style="position:absolute;left:799px;top:409px;width:1px;height:21px;background:#d9dee9;"></div><div style="position:absolute;left:878px;top:409px;width:1px;height:21px;background:#d9dee9;"></div><div style="position:absolute;left:927px;top:409px;width:1px;height:21px;background:#d9dee9;"></div><div style="position:absolute;left:1050px;top:409px;width:1px;height:21px;background:#d9dee9;"></div><div style="position:absolute;left:1158px;top:409px;width:1px;height:21px;background:#d9dee9;"></div><div style="position:absolute;left:41px;top:409px;width:87px;height:21px;background:#fff;border:1px dotted #222;"></div><div style="position:absolute;left:41px;width:87px;top:413px;text-align:center;font-size:13px;color:#111a2b;line-height:1">02/08/2022</div><div style="position:absolute;left:90px;width:96px;top:413px;text-align:right;font-size:13px;color:#111a2b;line-height:1;white-space:nowrap;letter-spacing:-0.3px">SemNo...</div><div style="position:absolute;left:195px;top:413px;font-size:13px;font-weight:400;color:#111a2b;white-space:nowrap;line-height:1;transform:scaleX(0.88);transform-origin:0 0;">LUCAS D</div><div style="position:absolute;left:315px;width:96px;top:413px;text-align:right;font-size:13px;color:#111a2b;line-height:1;white-space:nowrap;letter-spacing:-0.3px">125,00</div><div style="position:absolute;left:383px;width:96px;top:413px;text-align:right;font-size:13px;color:#111a2b;line-height:1;white-space:nowrap;letter-spacing:-0.3px">5,00</div><div style="position:absolute;left:451px;width:96px;top:413px;text-align:right;font-size:13px;color:#111a2b;line-height:1;white-space:nowrap;letter-spacing:-0.3px">120,00</div><div style="position:absolute;left:804px;top:414px;font-size:12px;font-weight:400;color:#111a2b;white-space:nowrap;line-height:1;letter-spacing:0.2px;">Normal</div><div style="position:absolute;left:896px;top:411px;width:15px;height:15px;background:linear-gradient(180deg,#f2f4f8,#d9dee7);border:1px solid #b9c0cc;"></div><svg style="position:absolute;left:896px;top:410px" width="15" height="15"><path d="M2.5 8 L6 12.5 L13 2" fill="none" stroke="#000" stroke-width="2"/></svg><div style="position:absolute;left:1163px;top:414px;font-size:12px;font-weight:400;color:#111a2b;white-space:nowrap;line-height:1;letter-spacing:0.25px;">Instrução Pendente</div><div style="position:absolute;left:41px;top:430px;width:1267px;height:21px;background:#ffffff;border-bottom:1px solid #d9dee9;"></div><div style="position:absolute;left:128px;top:430px;width:1px;height:21px;background:#d9dee9;"></div><div style="position:absolute;left:190px;top:430px;width:1px;height:21px;background:#d9dee9;"></div><div style="position:absolute;left:347px;top:430px;width:1px;height:21px;background:#d9dee9;"></div><div style="position:absolute;left:415px;top:430px;width:1px;height:21px;background:#d9dee9;"></div><div style="position:absolute;left:483px;top:430px;width:1px;height:21px;background:#d9dee9;"></div><div style="position:absolute;left:551px;top:430px;width:1px;height:21px;background:#d9dee9;"></div><div style="position:absolute;left:639px;top:430px;width:1px;height:21px;background:#d9dee9;"></div><div style="position:absolute;left:692px;top:430px;width:1px;height:21px;background:#d9dee9;"></div><div style="position:absolute;left:746px;top:430px;width:1px;height:21px;background:#d9dee9;"></div><div style="position:absolute;left:799px;top:430px;width:1px;height:21px;background:#d9dee9;"></div><div style="position:absolute;left:878px;top:430px;width:1px;height:21px;background:#d9dee9;"></div><div style="position:absolute;left:927px;top:430px;width:1px;height:21px;background:#d9dee9;"></div><div style="position:absolute;left:1050px;top:430px;width:1px;height:21px;background:#d9dee9;"></div><div style="position:absolute;left:1158px;top:430px;width:1px;height:21px;background:#d9dee9;"></div><div style="position:absolute;left:41px;width:87px;top:434px;text-align:center;font-size:13px;color:#111a2b;line-height:1">11/06/2022</div><div style="position:absolute;left:90px;width:96px;top:434px;text-align:right;font-size:13px;color:#111a2b;line-height:1;white-space:nowrap;letter-spacing:-0.3px">0</div><div style="position:absolute;left:195px;top:434px;font-size:13px;font-weight:400;color:#111a2b;white-space:nowrap;line-height:1;transform:scaleX(0.88);transform-origin:0 0;">ROBERTA</div><div style="position:absolute;left:315px;width:96px;top:434px;text-align:right;font-size:13px;color:#111a2b;line-height:1;white-space:nowrap;letter-spacing:-0.3px">55,00</div><div style="position:absolute;left:383px;width:96px;top:434px;text-align:right;font-size:13px;color:#111a2b;line-height:1;white-space:nowrap;letter-spacing:-0.3px"></div><div style="position:absolute;left:451px;width:96px;top:434px;text-align:right;font-size:13px;color:#111a2b;line-height:1;white-space:nowrap;letter-spacing:-0.3px">55,00</div><div style="position:absolute;left:804px;top:435px;font-size:12px;font-weight:400;color:#111a2b;white-space:nowrap;line-height:1;letter-spacing:0.2px;">Normal</div><div style="position:absolute;left:896px;top:432px;width:15px;height:15px;background:linear-gradient(180deg,#f2f4f8,#d9dee7);border:1px solid #b9c0cc;"></div><div style="position:absolute;left:1163px;top:435px;font-size:12px;font-weight:400;color:#111a2b;white-space:nowrap;line-height:1;letter-spacing:0.25px;">Novo</div><div style="position:absolute;left:41px;top:451px;width:1267px;height:21px;background:#ffffff;border-bottom:1px solid #d9dee9;"></div><div style="position:absolute;left:128px;top:451px;width:1px;height:21px;background:#d9dee9;"></div><div style="position:absolute;left:190px;top:451px;width:1px;height:21px;background:#d9dee9;"></div><div style="position:absolute;left:347px;top:451px;width:1px;height:21px;background:#d9dee9;"></div><div style="position:absolute;left:415px;top:451px;width:1px;height:21px;background:#d9dee9;"></div><div style="position:absolute;left:483px;top:451px;width:1px;height:21px;background:#d9dee9;"></div><div style="position:absolute;left:551px;top:451px;width:1px;height:21px;background:#d9dee9;"></div><div style="position:absolute;left:639px;top:451px;width:1px;height:21px;background:#d9dee9;"></div><div style="position:absolute;left:692px;top:451px;width:1px;height:21px;background:#d9dee9;"></div><div style="position:absolute;left:746px;top:451px;width:1px;height:21px;background:#d9dee9;"></div><div style="position:absolute;left:799px;top:451px;width:1px;height:21px;background:#d9dee9;"></div><div style="position:absolute;left:878px;top:451px;width:1px;height:21px;background:#d9dee9;"></div><div style="position:absolute;left:927px;top:451px;width:1px;height:21px;background:#d9dee9;"></div><div style="position:absolute;left:1050px;top:451px;width:1px;height:21px;background:#d9dee9;"></div><div style="position:absolute;left:1158px;top:451px;width:1px;height:21px;background:#d9dee9;"></div><div style="position:absolute;left:41px;width:87px;top:455px;text-align:center;font-size:13px;color:#111a2b;line-height:1">27/05/2022</div><div style="position:absolute;left:90px;width:96px;top:455px;text-align:right;font-size:13px;color:#111a2b;line-height:1;white-space:nowrap;letter-spacing:-0.3px">0</div><div style="position:absolute;left:195px;top:455px;font-size:13px;font-weight:400;color:#111a2b;white-space:nowrap;line-height:1;transform:scaleX(0.88);transform-origin:0 0;">ROBERTA</div><div style="position:absolute;left:315px;width:96px;top:455px;text-align:right;font-size:13px;color:#111a2b;line-height:1;white-space:nowrap;letter-spacing:-0.3px">55,00</div><div style="position:absolute;left:383px;width:96px;top:455px;text-align:right;font-size:13px;color:#111a2b;line-height:1;white-space:nowrap;letter-spacing:-0.3px"></div><div style="position:absolute;left:451px;width:96px;top:455px;text-align:right;font-size:13px;color:#111a2b;line-height:1;white-space:nowrap;letter-spacing:-0.3px">55,00</div><div style="position:absolute;left:804px;top:456px;font-size:12px;font-weight:400;color:#111a2b;white-space:nowrap;line-height:1;letter-spacing:0.2px;">Normal</div><div style="position:absolute;left:896px;top:453px;width:15px;height:15px;background:linear-gradient(180deg,#f2f4f8,#d9dee7);border:1px solid #b9c0cc;"></div><div style="position:absolute;left:1163px;top:456px;font-size:12px;font-weight:400;color:#111a2b;white-space:nowrap;line-height:1;letter-spacing:0.25px;">Novo</div><div style="position:absolute;left:41px;top:472px;width:1267px;height:21px;background:#ffffff;border-bottom:1px solid #d9dee9;"></div><div style="position:absolute;left:128px;top:472px;width:1px;height:21px;background:#d9dee9;"></div><div style="position:absolute;left:190px;top:472px;width:1px;height:21px;background:#d9dee9;"></div><div style="position:absolute;left:347px;top:472px;width:1px;height:21px;background:#d9dee9;"></div><div style="position:absolute;left:415px;top:472px;width:1px;height:21px;background:#d9dee9;"></div><div style="position:absolute;left:483px;top:472px;width:1px;height:21px;background:#d9dee9;"></div><div style="position:absolute;left:551px;top:472px;width:1px;height:21px;background:#d9dee9;"></div><div style="position:absolute;left:639px;top:472px;width:1px;height:21px;background:#d9dee9;"></div><div style="position:absolute;left:692px;top:472px;width:1px;height:21px;background:#d9dee9;"></div><div style="position:absolute;left:746px;top:472px;width:1px;height:21px;background:#d9dee9;"></div><div style="position:absolute;left:799px;top:472px;width:1px;height:21px;background:#d9dee9;"></div><div style="position:absolute;left:878px;top:472px;width:1px;height:21px;background:#d9dee9;"></div><div style="position:absolute;left:927px;top:472px;width:1px;height:21px;background:#d9dee9;"></div><div style="position:absolute;left:1050px;top:472px;width:1px;height:21px;background:#d9dee9;"></div><div style="position:absolute;left:1158px;top:472px;width:1px;height:21px;background:#d9dee9;"></div><div style="position:absolute;left:41px;width:87px;top:476px;text-align:center;font-size:13px;color:#111a2b;line-height:1">12/05/2022</div><div style="position:absolute;left:90px;width:96px;top:476px;text-align:right;font-size:13px;color:#111a2b;line-height:1;white-space:nowrap;letter-spacing:-0.3px">0</div><div style="position:absolute;left:195px;top:476px;font-size:13px;font-weight:400;color:#111a2b;white-space:nowrap;line-height:1;transform:scaleX(0.88);transform-origin:0 0;">ROBERTA</div><div style="position:absolute;left:315px;width:96px;top:476px;text-align:right;font-size:13px;color:#111a2b;line-height:1;white-space:nowrap;letter-spacing:-0.3px">55,00</div><div style="position:absolute;left:383px;width:96px;top:476px;text-align:right;font-size:13px;color:#111a2b;line-height:1;white-space:nowrap;letter-spacing:-0.3px"></div><div style="position:absolute;left:451px;width:96px;top:476px;text-align:right;font-size:13px;color:#111a2b;line-height:1;white-space:nowrap;letter-spacing:-0.3px">55,00</div><div style="position:absolute;left:804px;top:477px;font-size:12px;font-weight:400;color:#111a2b;white-space:nowrap;line-height:1;letter-spacing:0.2px;">Normal</div><div style="position:absolute;left:896px;top:474px;width:15px;height:15px;background:linear-gradient(180deg,#f2f4f8,#d9dee7);border:1px solid #b9c0cc;"></div><div style="position:absolute;left:1163px;top:477px;font-size:12px;font-weight:400;color:#111a2b;white-space:nowrap;line-height:1;letter-spacing:0.25px;">Novo</div><div style="position:absolute;left:41px;top:493px;width:1267px;height:21px;background:#ffffff;border-bottom:1px solid #d9dee9;"></div><div style="position:absolute;left:128px;top:493px;width:1px;height:21px;background:#d9dee9;"></div><div style="position:absolute;left:190px;top:493px;width:1px;height:21px;background:#d9dee9;"></div><div style="position:absolute;left:347px;top:493px;width:1px;height:21px;background:#d9dee9;"></div><div style="position:absolute;left:415px;top:493px;width:1px;height:21px;background:#d9dee9;"></div><div style="position:absolute;left:483px;top:493px;width:1px;height:21px;background:#d9dee9;"></div><div style="position:absolute;left:551px;top:493px;width:1px;height:21px;background:#d9dee9;"></div><div style="position:absolute;left:639px;top:493px;width:1px;height:21px;background:#d9dee9;"></div><div style="position:absolute;left:692px;top:493px;width:1px;height:21px;background:#d9dee9;"></div><div style="position:absolute;left:746px;top:493px;width:1px;height:21px;background:#d9dee9;"></div><div style="position:absolute;left:799px;top:493px;width:1px;height:21px;background:#d9dee9;"></div><div style="position:absolute;left:878px;top:493px;width:1px;height:21px;background:#d9dee9;"></div><div style="position:absolute;left:927px;top:493px;width:1px;height:21px;background:#d9dee9;"></div><div style="position:absolute;left:1050px;top:493px;width:1px;height:21px;background:#d9dee9;"></div><div style="position:absolute;left:1158px;top:493px;width:1px;height:21px;background:#d9dee9;"></div><div style="position:absolute;left:41px;width:87px;top:497px;text-align:center;font-size:13px;color:#111a2b;line-height:1">27/04/2022</div><div style="position:absolute;left:90px;width:96px;top:497px;text-align:right;font-size:13px;color:#111a2b;line-height:1;white-space:nowrap;letter-spacing:-0.3px">0</div><div style="position:absolute;left:195px;top:497px;font-size:13px;font-weight:400;color:#111a2b;white-space:nowrap;line-height:1;transform:scaleX(0.88);transform-origin:0 0;">ROBERTA</div><div style="position:absolute;left:315px;width:96px;top:497px;text-align:right;font-size:13px;color:#111a2b;line-height:1;white-space:nowrap;letter-spacing:-0.3px">55,00</div><div style="position:absolute;left:383px;width:96px;top:497px;text-align:right;font-size:13px;color:#111a2b;line-height:1;white-space:nowrap;letter-spacing:-0.3px"></div><div style="position:absolute;left:451px;width:96px;top:497px;text-align:right;font-size:13px;color:#111a2b;line-height:1;white-space:nowrap;letter-spacing:-0.3px">55,00</div><div style="position:absolute;left:804px;top:498px;font-size:12px;font-weight:400;color:#111a2b;white-space:nowrap;line-height:1;letter-spacing:0.2px;">Normal</div><div style="position:absolute;left:896px;top:495px;width:15px;height:15px;background:linear-gradient(180deg,#f2f4f8,#d9dee7);border:1px solid #b9c0cc;"></div><div style="position:absolute;left:1163px;top:498px;font-size:12px;font-weight:400;color:#111a2b;white-space:nowrap;line-height:1;letter-spacing:0.25px;">Novo</div><div style="position:absolute;left:41px;top:514px;width:1267px;height:21px;background:#ffffff;border-bottom:1px solid #d9dee9;"></div><div style="position:absolute;left:128px;top:514px;width:1px;height:21px;background:#d9dee9;"></div><div style="position:absolute;left:190px;top:514px;width:1px;height:21px;background:#d9dee9;"></div><div style="position:absolute;left:347px;top:514px;width:1px;height:21px;background:#d9dee9;"></div><div style="position:absolute;left:415px;top:514px;width:1px;height:21px;background:#d9dee9;"></div><div style="position:absolute;left:483px;top:514px;width:1px;height:21px;background:#d9dee9;"></div><div style="position:absolute;left:551px;top:514px;width:1px;height:21px;background:#d9dee9;"></div><div style="position:absolute;left:639px;top:514px;width:1px;height:21px;background:#d9dee9;"></div><div style="position:absolute;left:692px;top:514px;width:1px;height:21px;background:#d9dee9;"></div><div style="position:absolute;left:746px;top:514px;width:1px;height:21px;background:#d9dee9;"></div><div style="position:absolute;left:799px;top:514px;width:1px;height:21px;background:#d9dee9;"></div><div style="position:absolute;left:878px;top:514px;width:1px;height:21px;background:#d9dee9;"></div><div style="position:absolute;left:927px;top:514px;width:1px;height:21px;background:#d9dee9;"></div><div style="position:absolute;left:1050px;top:514px;width:1px;height:21px;background:#d9dee9;"></div><div style="position:absolute;left:1158px;top:514px;width:1px;height:21px;background:#d9dee9;"></div><div style="position:absolute;left:41px;width:87px;top:518px;text-align:center;font-size:13px;color:#111a2b;line-height:1">15/04/2022</div><div style="position:absolute;left:90px;width:96px;top:518px;text-align:right;font-size:13px;color:#111a2b;line-height:1;white-space:nowrap;letter-spacing:-0.3px">222</div><div style="position:absolute;left:195px;top:518px;font-size:13px;font-weight:400;color:#111a2b;white-space:nowrap;line-height:1;transform:scaleX(0.88);transform-origin:0 0;">EASY INFO SERV E CO...</div><div style="position:absolute;left:315px;width:96px;top:518px;text-align:right;font-size:13px;color:#111a2b;line-height:1;white-space:nowrap;letter-spacing:-0.3px">650,00</div><div style="position:absolute;left:383px;width:96px;top:518px;text-align:right;font-size:13px;color:#111a2b;line-height:1;white-space:nowrap;letter-spacing:-0.3px"></div><div style="position:absolute;left:451px;width:96px;top:518px;text-align:right;font-size:13px;color:#111a2b;line-height:1;white-space:nowrap;letter-spacing:-0.3px">650,00</div><div style="position:absolute;left:804px;top:519px;font-size:12px;font-weight:400;color:#111a2b;white-space:nowrap;line-height:1;letter-spacing:0.2px;">Normal</div><div style="position:absolute;left:896px;top:516px;width:15px;height:15px;background:linear-gradient(180deg,#f2f4f8,#d9dee7);border:1px solid #b9c0cc;"></div><div style="position:absolute;left:1163px;top:519px;font-size:12px;font-weight:400;color:#111a2b;white-space:nowrap;line-height:1;letter-spacing:0.25px;">Novo</div><div style="position:absolute;left:41px;top:535px;width:1267px;height:21px;background:#ffffff;border-bottom:1px solid #d9dee9;"></div><div style="position:absolute;left:128px;top:535px;width:1px;height:21px;background:#d9dee9;"></div><div style="position:absolute;left:190px;top:535px;width:1px;height:21px;background:#d9dee9;"></div><div style="position:absolute;left:347px;top:535px;width:1px;height:21px;background:#d9dee9;"></div><div style="position:absolute;left:415px;top:535px;width:1px;height:21px;background:#d9dee9;"></div><div style="position:absolute;left:483px;top:535px;width:1px;height:21px;background:#d9dee9;"></div><div style="position:absolute;left:551px;top:535px;width:1px;height:21px;background:#d9dee9;"></div><div style="position:absolute;left:639px;top:535px;width:1px;height:21px;background:#d9dee9;"></div><div style="position:absolute;left:692px;top:535px;width:1px;height:21px;background:#d9dee9;"></div><div style="position:absolute;left:746px;top:535px;width:1px;height:21px;background:#d9dee9;"></div><div style="position:absolute;left:799px;top:535px;width:1px;height:21px;background:#d9dee9;"></div><div style="position:absolute;left:878px;top:535px;width:1px;height:21px;background:#d9dee9;"></div><div style="position:absolute;left:927px;top:535px;width:1px;height:21px;background:#d9dee9;"></div><div style="position:absolute;left:1050px;top:535px;width:1px;height:21px;background:#d9dee9;"></div><div style="position:absolute;left:1158px;top:535px;width:1px;height:21px;background:#d9dee9;"></div><div style="position:absolute;left:41px;width:87px;top:539px;text-align:center;font-size:13px;color:#111a2b;line-height:1">08/04/2022</div><div style="position:absolute;left:90px;width:96px;top:539px;text-align:right;font-size:13px;color:#111a2b;line-height:1;white-space:nowrap;letter-spacing:-0.3px">227</div><div style="position:absolute;left:195px;top:539px;font-size:13px;font-weight:400;color:#111a2b;white-space:nowrap;line-height:1;transform:scaleX(0.88);transform-origin:0 0;">ROBERTA</div><div style="position:absolute;left:315px;width:96px;top:539px;text-align:right;font-size:13px;color:#111a2b;line-height:1;white-space:nowrap;letter-spacing:-0.3px">175,01</div><div style="position:absolute;left:383px;width:96px;top:539px;text-align:right;font-size:13px;color:#111a2b;line-height:1;white-space:nowrap;letter-spacing:-0.3px"></div><div style="position:absolute;left:451px;width:96px;top:539px;text-align:right;font-size:13px;color:#111a2b;line-height:1;white-space:nowrap;letter-spacing:-0.3px">175,01</div><div style="position:absolute;left:804px;top:540px;font-size:12px;font-weight:400;color:#111a2b;white-space:nowrap;line-height:1;letter-spacing:0.2px;">Normal</div><div style="position:absolute;left:896px;top:537px;width:15px;height:15px;background:linear-gradient(180deg,#f2f4f8,#d9dee7);border:1px solid #b9c0cc;"></div><div style="position:absolute;left:1163px;top:540px;font-size:12px;font-weight:400;color:#111a2b;white-space:nowrap;line-height:1;letter-spacing:0.25px;">Novo</div><div style="position:absolute;left:41px;top:556px;width:1267px;height:21px;background:#ffffff;border-bottom:1px solid #d9dee9;"></div><div style="position:absolute;left:128px;top:556px;width:1px;height:21px;background:#d9dee9;"></div><div style="position:absolute;left:190px;top:556px;width:1px;height:21px;background:#d9dee9;"></div><div style="position:absolute;left:347px;top:556px;width:1px;height:21px;background:#d9dee9;"></div><div style="position:absolute;left:415px;top:556px;width:1px;height:21px;background:#d9dee9;"></div><div style="position:absolute;left:483px;top:556px;width:1px;height:21px;background:#d9dee9;"></div><div style="position:absolute;left:551px;top:556px;width:1px;height:21px;background:#d9dee9;"></div><div style="position:absolute;left:639px;top:556px;width:1px;height:21px;background:#d9dee9;"></div><div style="position:absolute;left:692px;top:556px;width:1px;height:21px;background:#d9dee9;"></div><div style="position:absolute;left:746px;top:556px;width:1px;height:21px;background:#d9dee9;"></div><div style="position:absolute;left:799px;top:556px;width:1px;height:21px;background:#d9dee9;"></div><div style="position:absolute;left:878px;top:556px;width:1px;height:21px;background:#d9dee9;"></div><div style="position:absolute;left:927px;top:556px;width:1px;height:21px;background:#d9dee9;"></div><div style="position:absolute;left:1050px;top:556px;width:1px;height:21px;background:#d9dee9;"></div><div style="position:absolute;left:1158px;top:556px;width:1px;height:21px;background:#d9dee9;"></div><div style="position:absolute;left:41px;width:87px;top:560px;text-align:center;font-size:13px;color:#111a2b;line-height:1">07/04/2022</div><div style="position:absolute;left:90px;width:96px;top:560px;text-align:right;font-size:13px;color:#111a2b;line-height:1;white-space:nowrap;letter-spacing:-0.3px">226</div><div style="position:absolute;left:195px;top:560px;font-size:13px;font-weight:400;color:#111a2b;white-space:nowrap;line-height:1;transform:scaleX(0.88);transform-origin:0 0;">ROBERTA</div><div style="position:absolute;left:315px;width:96px;top:560px;text-align:right;font-size:13px;color:#111a2b;line-height:1;white-space:nowrap;letter-spacing:-0.3px">44,00</div><div style="position:absolute;left:383px;width:96px;top:560px;text-align:right;font-size:13px;color:#111a2b;line-height:1;white-space:nowrap;letter-spacing:-0.3px"></div><div style="position:absolute;left:451px;width:96px;top:560px;text-align:right;font-size:13px;color:#111a2b;line-height:1;white-space:nowrap;letter-spacing:-0.3px">44,00</div><div style="position:absolute;left:804px;top:561px;font-size:12px;font-weight:400;color:#111a2b;white-space:nowrap;line-height:1;letter-spacing:0.2px;">Normal</div><div style="position:absolute;left:896px;top:558px;width:15px;height:15px;background:linear-gradient(180deg,#f2f4f8,#d9dee7);border:1px solid #b9c0cc;"></div><div style="position:absolute;left:1163px;top:561px;font-size:12px;font-weight:400;color:#111a2b;white-space:nowrap;line-height:1;letter-spacing:0.25px;">Novo</div><div style="position:absolute;left:41px;top:577px;width:1267px;height:21px;background:#ffffff;border-bottom:1px solid #d9dee9;"></div><div style="position:absolute;left:128px;top:577px;width:1px;height:21px;background:#d9dee9;"></div><div style="position:absolute;left:190px;top:577px;width:1px;height:21px;background:#d9dee9;"></div><div style="position:absolute;left:347px;top:577px;width:1px;height:21px;background:#d9dee9;"></div><div style="position:absolute;left:415px;top:577px;width:1px;height:21px;background:#d9dee9;"></div><div style="position:absolute;left:483px;top:577px;width:1px;height:21px;background:#d9dee9;"></div><div style="position:absolute;left:551px;top:577px;width:1px;height:21px;background:#d9dee9;"></div><div style="position:absolute;left:639px;top:577px;width:1px;height:21px;background:#d9dee9;"></div><div style="position:absolute;left:692px;top:577px;width:1px;height:21px;background:#d9dee9;"></div><div style="position:absolute;left:746px;top:577px;width:1px;height:21px;background:#d9dee9;"></div><div style="position:absolute;left:799px;top:577px;width:1px;height:21px;background:#d9dee9;"></div><div style="position:absolute;left:878px;top:577px;width:1px;height:21px;background:#d9dee9;"></div><div style="position:absolute;left:927px;top:577px;width:1px;height:21px;background:#d9dee9;"></div><div style="position:absolute;left:1050px;top:577px;width:1px;height:21px;background:#d9dee9;"></div><div style="position:absolute;left:1158px;top:577px;width:1px;height:21px;background:#d9dee9;"></div><div style="position:absolute;left:41px;width:87px;top:581px;text-align:center;font-size:13px;color:#111a2b;line-height:1">29/03/2022</div><div style="position:absolute;left:90px;width:96px;top:581px;text-align:right;font-size:13px;color:#111a2b;line-height:1;white-space:nowrap;letter-spacing:-0.3px">210</div><div style="position:absolute;left:195px;top:581px;font-size:13px;font-weight:400;color:#111a2b;white-space:nowrap;line-height:1;transform:scaleX(0.88);transform-origin:0 0;">LUCAS D</div><div style="position:absolute;left:315px;width:96px;top:581px;text-align:right;font-size:13px;color:#111a2b;line-height:1;white-space:nowrap;letter-spacing:-0.3px">70,60</div><div style="position:absolute;left:383px;width:96px;top:581px;text-align:right;font-size:13px;color:#111a2b;line-height:1;white-space:nowrap;letter-spacing:-0.3px"></div><div style="position:absolute;left:451px;width:96px;top:581px;text-align:right;font-size:13px;color:#111a2b;line-height:1;white-space:nowrap;letter-spacing:-0.3px">70,60</div><div style="position:absolute;left:804px;top:582px;font-size:12px;font-weight:400;color:#111a2b;white-space:nowrap;line-height:1;letter-spacing:0.2px;">Normal</div><div style="position:absolute;left:896px;top:579px;width:15px;height:15px;background:linear-gradient(180deg,#f2f4f8,#d9dee7);border:1px solid #b9c0cc;"></div><div style="position:absolute;left:1163px;top:582px;font-size:12px;font-weight:400;color:#111a2b;white-space:nowrap;line-height:1;letter-spacing:0.25px;">Novo</div><div style="position:absolute;left:41px;top:598px;width:1267px;height:21px;background:#ffffff;border-bottom:1px solid #d9dee9;"></div><div style="position:absolute;left:128px;top:598px;width:1px;height:21px;background:#d9dee9;"></div><div style="position:absolute;left:190px;top:598px;width:1px;height:21px;background:#d9dee9;"></div><div style="position:absolute;left:347px;top:598px;width:1px;height:21px;background:#d9dee9;"></div><div style="position:absolute;left:415px;top:598px;width:1px;height:21px;background:#d9dee9;"></div><div style="position:absolute;left:483px;top:598px;width:1px;height:21px;background:#d9dee9;"></div><div style="position:absolute;left:551px;top:598px;width:1px;height:21px;background:#d9dee9;"></div><div style="position:absolute;left:639px;top:598px;width:1px;height:21px;background:#d9dee9;"></div><div style="position:absolute;left:692px;top:598px;width:1px;height:21px;background:#d9dee9;"></div><div style="position:absolute;left:746px;top:598px;width:1px;height:21px;background:#d9dee9;"></div><div style="position:absolute;left:799px;top:598px;width:1px;height:21px;background:#d9dee9;"></div><div style="position:absolute;left:878px;top:598px;width:1px;height:21px;background:#d9dee9;"></div><div style="position:absolute;left:927px;top:598px;width:1px;height:21px;background:#d9dee9;"></div><div style="position:absolute;left:1050px;top:598px;width:1px;height:21px;background:#d9dee9;"></div><div style="position:absolute;left:1158px;top:598px;width:1px;height:21px;background:#d9dee9;"></div><div style="position:absolute;left:41px;width:87px;top:602px;text-align:center;font-size:13px;color:#111a2b;line-height:1">29/03/2022</div><div style="position:absolute;left:90px;width:96px;top:602px;text-align:right;font-size:13px;color:#111a2b;line-height:1;white-space:nowrap;letter-spacing:-0.3px"></div><div style="position:absolute;left:195px;top:602px;font-size:13px;font-weight:400;color:#111a2b;white-space:nowrap;line-height:1;transform:scaleX(0.88);transform-origin:0 0;">LUCAS D</div><div style="position:absolute;left:315px;width:96px;top:602px;text-align:right;font-size:13px;color:#111a2b;line-height:1;white-space:nowrap;letter-spacing:-0.3px">132,00</div><div style="position:absolute;left:383px;width:96px;top:602px;text-align:right;font-size:13px;color:#111a2b;line-height:1;white-space:nowrap;letter-spacing:-0.3px"></div><div style="position:absolute;left:451px;width:96px;top:602px;text-align:right;font-size:13px;color:#111a2b;line-height:1;white-space:nowrap;letter-spacing:-0.3px">132,00</div><div style="position:absolute;left:804px;top:603px;font-size:12px;font-weight:400;color:#111a2b;white-space:nowrap;line-height:1;letter-spacing:0.2px;">Normal</div><div style="position:absolute;left:896px;top:600px;width:15px;height:15px;background:linear-gradient(180deg,#f2f4f8,#d9dee7);border:1px solid #b9c0cc;"></div><div style="position:absolute;left:1163px;top:603px;font-size:12px;font-weight:400;color:#111a2b;white-space:nowrap;line-height:1;letter-spacing:0.25px;">Novo</div><div style="position:absolute;left:41px;top:619px;width:1267px;height:21px;background:#ffffff;border-bottom:1px solid #d9dee9;"></div><div style="position:absolute;left:128px;top:619px;width:1px;height:21px;background:#d9dee9;"></div><div style="position:absolute;left:190px;top:619px;width:1px;height:21px;background:#d9dee9;"></div><div style="position:absolute;left:347px;top:619px;width:1px;height:21px;background:#d9dee9;"></div><div style="position:absolute;left:415px;top:619px;width:1px;height:21px;background:#d9dee9;"></div><div style="position:absolute;left:483px;top:619px;width:1px;height:21px;background:#d9dee9;"></div><div style="position:absolute;left:551px;top:619px;width:1px;height:21px;background:#d9dee9;"></div><div style="position:absolute;left:639px;top:619px;width:1px;height:21px;background:#d9dee9;"></div><div style="position:absolute;left:692px;top:619px;width:1px;height:21px;background:#d9dee9;"></div><div style="position:absolute;left:746px;top:619px;width:1px;height:21px;background:#d9dee9;"></div><div style="position:absolute;left:799px;top:619px;width:1px;height:21px;background:#d9dee9;"></div><div style="position:absolute;left:878px;top:619px;width:1px;height:21px;background:#d9dee9;"></div><div style="position:absolute;left:927px;top:619px;width:1px;height:21px;background:#d9dee9;"></div><div style="position:absolute;left:1050px;top:619px;width:1px;height:21px;background:#d9dee9;"></div><div style="position:absolute;left:1158px;top:619px;width:1px;height:21px;background:#d9dee9;"></div><div style="position:absolute;left:41px;width:87px;top:623px;text-align:center;font-size:13px;color:#111a2b;line-height:1">15/10/2021</div><div style="position:absolute;left:90px;width:96px;top:623px;text-align:right;font-size:13px;color:#111a2b;line-height:1;white-space:nowrap;letter-spacing:-0.3px">165</div><div style="position:absolute;left:195px;top:623px;font-size:13px;font-weight:400;color:#111a2b;white-space:nowrap;line-height:1;">Henrique M Aguiar</div><div style="position:absolute;left:315px;width:96px;top:623px;text-align:right;font-size:13px;color:#111a2b;line-height:1;white-space:nowrap;letter-spacing:-0.3px">174,75</div><div style="position:absolute;left:383px;width:96px;top:623px;text-align:right;font-size:13px;color:#111a2b;line-height:1;white-space:nowrap;letter-spacing:-0.3px"></div><div style="position:absolute;left:451px;width:96px;top:623px;text-align:right;font-size:13px;color:#111a2b;line-height:1;white-space:nowrap;letter-spacing:-0.3px">174,75</div><div style="position:absolute;left:804px;top:624px;font-size:12px;font-weight:400;color:#111a2b;white-space:nowrap;line-height:1;letter-spacing:0.2px;">Normal</div><div style="position:absolute;left:896px;top:621px;width:15px;height:15px;background:linear-gradient(180deg,#f2f4f8,#d9dee7);border:1px solid #b9c0cc;"></div><svg style="position:absolute;left:896px;top:620px" width="15" height="15"><path d="M2.5 8 L6 12.5 L13 2" fill="none" stroke="#000" stroke-width="2"/></svg><div style="position:absolute;left:1163px;top:624px;font-size:12px;font-weight:400;color:#111a2b;white-space:nowrap;line-height:1;letter-spacing:0.25px;">Arquivo Gerado</div><div style="position:absolute;left:41px;top:640px;width:1267px;height:21px;background:#ffffff;border-bottom:1px solid #d9dee9;"></div><div style="position:absolute;left:128px;top:640px;width:1px;height:21px;background:#d9dee9;"></div><div style="position:absolute;left:190px;top:640px;width:1px;height:21px;background:#d9dee9;"></div><div style="position:absolute;left:347px;top:640px;width:1px;height:21px;background:#d9dee9;"></div><div style="position:absolute;left:415px;top:640px;width:1px;height:21px;background:#d9dee9;"></div><div style="position:absolute;left:483px;top:640px;width:1px;height:21px;background:#d9dee9;"></div><div style="position:absolute;left:551px;top:640px;width:1px;height:21px;background:#d9dee9;"></div><div style="position:absolute;left:639px;top:640px;width:1px;height:21px;background:#d9dee9;"></div><div style="position:absolute;left:692px;top:640px;width:1px;height:21px;background:#d9dee9;"></div><div style="position:absolute;left:746px;top:640px;width:1px;height:21px;background:#d9dee9;"></div><div style="position:absolute;left:799px;top:640px;width:1px;height:21px;background:#d9dee9;"></div><div style="position:absolute;left:878px;top:640px;width:1px;height:21px;background:#d9dee9;"></div><div style="position:absolute;left:927px;top:640px;width:1px;height:21px;background:#d9dee9;"></div><div style="position:absolute;left:1050px;top:640px;width:1px;height:21px;background:#d9dee9;"></div><div style="position:absolute;left:1158px;top:640px;width:1px;height:21px;background:#d9dee9;"></div><div style="position:absolute;left:41px;width:87px;top:644px;text-align:center;font-size:13px;color:#111a2b;line-height:1">18/09/2021</div><div style="position:absolute;left:90px;width:96px;top:644px;text-align:right;font-size:13px;color:#111a2b;line-height:1;white-space:nowrap;letter-spacing:-0.3px">131</div><div style="position:absolute;left:195px;top:644px;font-size:13px;font-weight:400;color:#111a2b;white-space:nowrap;line-height:1;transform:scaleX(0.88);transform-origin:0 0;">LUCAS D</div><div style="position:absolute;left:315px;width:96px;top:644px;text-align:right;font-size:13px;color:#111a2b;line-height:1;white-space:nowrap;letter-spacing:-0.3px">367,08</div><div style="position:absolute;left:383px;width:96px;top:644px;text-align:right;font-size:13px;color:#111a2b;line-height:1;white-space:nowrap;letter-spacing:-0.3px"></div><div style="position:absolute;left:451px;width:96px;top:644px;text-align:right;font-size:13px;color:#111a2b;line-height:1;white-space:nowrap;letter-spacing:-0.3px">367,08</div><div style="position:absolute;left:804px;top:645px;font-size:12px;font-weight:400;color:#111a2b;white-space:nowrap;line-height:1;letter-spacing:0.2px;">Normal</div><div style="position:absolute;left:896px;top:642px;width:15px;height:15px;background:linear-gradient(180deg,#f2f4f8,#d9dee7);border:1px solid #b9c0cc;"></div><svg style="position:absolute;left:896px;top:641px" width="15" height="15"><path d="M2.5 8 L6 12.5 L13 2" fill="none" stroke="#000" stroke-width="2"/></svg><div style="position:absolute;left:1163px;top:645px;font-size:12px;font-weight:400;color:#111a2b;white-space:nowrap;line-height:1;letter-spacing:0.25px;">Arquivo Gerado</div><div style="position:absolute;left:1308px;top:409px;width:17px;height:252px;background:#e8eaee;border-left:1px solid #dfe3ea;"></div><svg style="position:absolute;left:1312px;top:414px" width="9" height="5"><path d="M0 5 L9 5 L4.5 0 Z" fill="#9aa3b2"/></svg><div style="position:absolute;left:1310px;top:426px;width:14px;height:26px;background:linear-gradient(90deg,#f6f7f9,#e1e5eb);border:1px solid #b7bfcc;border-radius:2px;"><div style="position:absolute;left:4px;top:9px;width:6px;height:1px;background:#6d7584;"></div><div style="position:absolute;left:4px;top:12px;width:6px;height:1px;background:#6d7584;"></div><div style="position:absolute;left:4px;top:15px;width:6px;height:1px;background:#6d7584;"></div></div><svg style="position:absolute;left:1312px;top:651px" width="9" height="5"><path d="M0 0 L9 0 L4.5 5 Z" fill="#9aa3b2"/></svg><div style="position:absolute;left:41px;top:661px;width:1267px;height:18px;background:#e8eaee;border-top:1px solid #d0d5de;"></div><div style="position:absolute;left:41px;top:661px;width:52px;height:18px;background:linear-gradient(180deg,#e9ebf0,#d9dde5);"></div><div style="position:absolute;left:94px;top:661px;width:95px;height:18px;background:#fff;"></div><div style="position:absolute;left:189px;top:661px;width:51px;height:18px;background:linear-gradient(180deg,#e9ebf0,#d9dde5);"></div><div style="position:absolute;left:101px;top:665px;font-size:11px;font-weight:400;color:#1a2336;white-space:nowrap;line-height:1;letter-spacing:-0.05px;">Registro 1 de 94</div><svg style="position:absolute;left:45px;top:665px;" width="50" height="10" viewBox="0 0 50 10">
<path d="M0.5 1 L0.5 9" stroke="#8b93a2" stroke-width="1.2"/><path d="M5 1 L1.5 5 L5 9 Z M9 1 L5.5 5 L9 9 Z" fill="#8b93a2"/>
<path d="M23 1 L19.5 5 L23 9 Z M27 1 L23.5 5 L27 9 Z" fill="#8b93a2"/>
<path d="M42.5 1 L39 5 L42.5 9 Z" fill="#8b93a2"/>
</svg><svg style="position:absolute;left:196px;top:665px;" width="44" height="10" viewBox="0 0 44 10">
<path d="M0.5 1 L4 5 L0.5 9 Z" fill="#1a2336"/>
<path d="M15 1 L18.5 5 L15 9 Z M19 1 L22.5 5 L19 9 Z" fill="#1a2336"/>
<path d="M32 1 L35.5 5 L32 9 Z M36 1 L39.5 5 L36 9 Z" fill="#1a2336"/><path d="M41 1 L41 9" stroke="#1a2336" stroke-width="1.2"/>
</svg><svg style="position:absolute;left:244px;top:666px" width="5" height="9"><path d="M5 0 L5 9 L0 4.5 Z" fill="#c4c9d2"/></svg><svg style="position:absolute;left:1298px;top:666px" width="5" height="9"><path d="M0 0 L0 9 L5 4.5 Z" fill="#c4c9d2"/></svg><div style="position:absolute;left:1308px;top:661px;width:17px;height:18px;background:#bfcad9;"></div><div style="position:absolute;left:0px;top:701px;width:1366px;height:27px;background:linear-gradient(180deg,#d2d9e4 0%,#c5cedb 50%,#b4bfcf 100%);border-top:1px solid #e0e5ec;"></div><div style="position:absolute;left:4px;top:707px;width:2px;height:2px;background:#5b6576;"></div><div style="position:absolute;left:4px;top:711px;width:2px;height:2px;background:#5b6576;"></div><div style="position:absolute;left:4px;top:715px;width:2px;height:2px;background:#5b6576;"></div><div style="position:absolute;left:4px;top:719px;width:2px;height:2px;background:#5b6576;"></div><svg style="position:absolute;left:18px;top:706px;" width="17" height="17" viewBox="0 0 17 17"><path d="M0.5 0.5 L12 0.5 L15.5 4 L15.5 15.5 L0.5 15.5 Z" fill="#d9f2cf" stroke="#2f8a2a" stroke-width="1"/><text x="2" y="9" font-family="Liberation Sans" font-size="9" font-weight="400" fill="#222">P</text><circle cx="11.5" cy="12" r="4.5" fill="#2aa22a"/><text x="11.5" y="15" font-family="Liberation Sans" font-size="8" font-weight="700" fill="#fff" text-anchor="middle">$</text></svg><div style="position:absolute;left:47px;top:708px;font-size:12px;font-weight:400;color:#1a2336;white-space:nowrap;line-height:1;letter-spacing:-0.1px;">Pedido de Compra</div><div style="position:absolute;left:159px;top:708px;font-size:12px;font-weight:400;color:#1a2336;white-space:nowrap;line-height:1;letter-spacing:-0.1px;">Recebimento</div><svg style="position:absolute;left:243px;top:706px;" width="16" height="16" viewBox="0 0 16 16"><path d="M0.5 0.5 L12 0.5 L15.5 4 L15.5 15.5 L0.5 15.5 Z" fill="#e4f7dd" stroke="#2fb02a" stroke-width="1"/><path d="M12 0.5 L12 4 L15.5 4" fill="#fff" stroke="#2fb02a" stroke-width="0.8"/><rect x="2.5" y="2.5" width="4" height="4" fill="none" stroke="#2fb02a" stroke-width="1"/><rect x="8" y="3.0" width="5" height="1" fill="#2fb02a"/><rect x="8" y="5.5" width="5.5" height="1" fill="#2fb02a"/><rect x="2.5" y="8.0" width="4" height="4" fill="none" stroke="#2fb02a" stroke-width="1"/><rect x="8" y="8.5" width="5" height="1" fill="#2fb02a"/><rect x="8" y="11.0" width="5.5" height="1" fill="#2fb02a"/><rect x="2.5" y="13" width="11" height="1" fill="#2fb02a"/></svg><svg style="position:absolute;left:273px;top:706px;" width="16" height="16" viewBox="0 0 16 16"><path d="M0.5 0.5 L12 0.5 L15.5 4 L15.5 15.5 L0.5 15.5 Z" fill="#fbe3e3" stroke="#d22a2a" stroke-width="1"/><path d="M12 0.5 L12 4 L15.5 4" fill="#fff" stroke="#d22a2a" stroke-width="0.8"/><rect x="2.5" y="2.5" width="4" height="4" fill="none" stroke="#d22a2a" stroke-width="1"/><rect x="8" y="3.0" width="5" height="1" fill="#d22a2a"/><rect x="8" y="5.5" width="5.5" height="1" fill="#d22a2a"/><rect x="2.5" y="8.0" width="4" height="4" fill="none" stroke="#d22a2a" stroke-width="1"/><rect x="8" y="8.5" width="5" height="1" fill="#d22a2a"/><rect x="8" y="11.0" width="5.5" height="1" fill="#d22a2a"/><rect x="2.5" y="13" width="11" height="1" fill="#d22a2a"/></svg><svg style="position:absolute;left:303px;top:706px;" width="16" height="16" viewBox="0 0 16 16"><rect x="0" y="0" width="16" height="16" fill="#eef0f3"/><text x="1" y="10" font-family="Liberation Sans" font-size="11" fill="#222">P</text><path d="M9 9 L11.5 9 L11.5 6.5 L14 6.5 L14 9 L16 9 L16 11.5 L14 11.5 L14 14 L11.5 14 L11.5 11.5 L9 11.5 Z" fill="#3a8ae6"/></svg><svg style="position:absolute;left:333px;top:706px;" width="16" height="16" viewBox="0 0 16 16"><rect x="0" y="0" width="16" height="16" fill="#fff"/><path d="M3 1 L11 1 L13 3 L13 15 L3 15 Z" fill="#fafafa" stroke="#b9bec6" stroke-width="0.8"/><rect x="4.5" y="5.0" width="7" height="1.2" fill="#7fc6ee"/><rect x="4.5" y="7.3" width="7" height="1.2" fill="#7fc6ee"/><rect x="4.5" y="9.6" width="7" height="1.2" fill="#7fc6ee"/><rect x="4.5" y="11.9" width="7" height="1.2" fill="#7fc6ee"/></svg><svg style="position:absolute;left:363px;top:706px;" width="16" height="16" viewBox="0 0 16 16"><rect x="0" y="0" width="16" height="16" fill="#fff"/><circle cx="6" cy="4" r="2.6" fill="#e9b98a"/><path d="M3.5 2.5 Q6 0 8.5 2.5" fill="#8a5a2a"/><path d="M1 14 Q2 8 6 8 Q9 8 9 10 L9 14 Z" fill="#8f95a3"/><circle cx="11" cy="8" r="2.6" fill="#f0c49a"/><path d="M8.2 8 Q8 4.5 11 4.8 Q14 4.5 13.8 8 L13.8 11 L8.2 11 Z" fill="#7a4a1e"/><circle cx="11" cy="8.3" r="2" fill="#f0c49a"/><path d="M6.5 16 Q7 11 11 11 Q15 11 15.5 16 Z" fill="#222"/></svg><svg style="position:absolute;left:393px;top:706px;" width="16" height="16" viewBox="0 0 16 16"><rect x="0.5" y="0.5" width="15" height="15" fill="#f3f4f6" stroke="#a7acb5" stroke-width="0.8"/><rect x="0.5" y="0.5" width="15" height="3" fill="#2a8ad8"/><rect x="1" y="4" width="5" height="11" fill="#dcdfe4"/><rect x="8" y="9" width="7" height="6" fill="#d7a72a"/><path d="M9.5 9 L9.5 7 Q11.5 4.5 13.5 7 L13.5 9" fill="none" stroke="#c9971a" stroke-width="1.2"/></svg><div style="position:absolute;left:422px;top:708px;font-size:12px;font-weight:400;color:#1a2336;white-space:nowrap;line-height:1;letter-spacing:0.2px;">Produto Monitoramento</div><div style="position:absolute;left:565px;top:708px;font-size:12px;font-weight:400;color:#1a2336;white-space:nowrap;line-height:1;letter-spacing:0.23px;">Tipo contato</div><div style="position:absolute;left:646px;top:708px;font-size:12px;font-weight:400;color:#1a2336;white-space:nowrap;line-height:1;letter-spacing:-0.1px;">Mídia</div></div></body></html>
